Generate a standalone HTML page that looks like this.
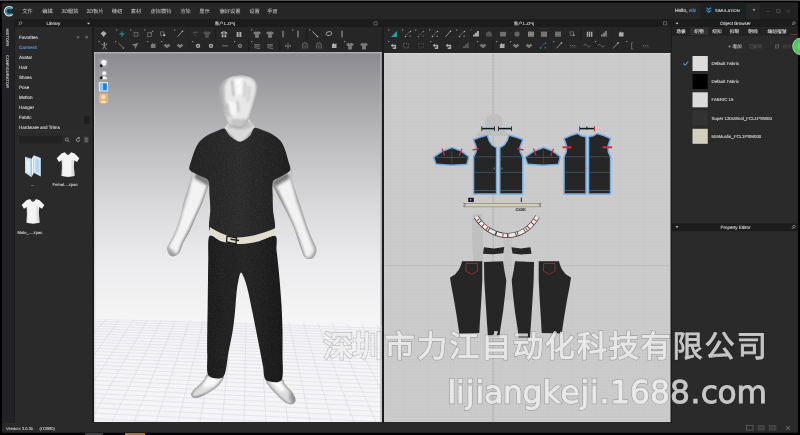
<!DOCTYPE html>
<html lang="zh"><head><meta charset="utf-8"><title>CLO</title>
<style>
html,body{margin:0;padding:0;background:#000;overflow:hidden;width:800px;height:435px}
svg{display:block}
text{font-family:"Liberation Sans","Noto Sans CJK SC",sans-serif;text-rendering:geometricPrecision}
.wml{font-family:"DejaVu Sans","Liberation Sans",sans-serif}
.wmc{font-family:"Noto Sans CJK SC","Liberation Sans",sans-serif}
</style></head><body>
<svg width="800" height="435" viewBox="0 0 800 435">
<defs>
<linearGradient id="g3d" gradientUnits="userSpaceOnUse" x1="0" y1="53" x2="0" y2="320">
<stop offset="0" stop-color="#8b8b8f"/>
<stop offset="0.18" stop-color="#a6a6a9"/>
<stop offset="0.37" stop-color="#c1c1c3"/>
<stop offset="0.55" stop-color="#d7d7d9"/>
<stop offset="0.78" stop-color="#ebebed"/>
<stop offset="1" stop-color="#f5f5f6"/>
</linearGradient>
<pattern id="grid2d" width="3" height="3" patternUnits="userSpaceOnUse" x="384" y="53">
<rect width="3" height="3" fill="#cccccc"/>
<path d="M0 0.5H3M0.5 0V3" stroke="#c6c6c6" stroke-width="0.5" fill="none"/>
</pattern>
<linearGradient id="skinH" x1="0" y1="0" x2="1" y2="0">
<stop offset="0" stop-color="#f4f4f4"/>
<stop offset="0.55" stop-color="#e2e2e2"/>
<stop offset="1" stop-color="#a9a9a9"/>
</linearGradient>
<linearGradient id="skinL" x1="0" y1="0" x2="1" y2="0">
<stop offset="0" stop-color="#b8b8b8"/>
<stop offset="0.4" stop-color="#f2f2f2"/>
<stop offset="1" stop-color="#c4c4c4"/>
</linearGradient>
<linearGradient id="skinR" x1="0" y1="0" x2="1" y2="0">
<stop offset="0" stop-color="#bdbdbd"/>
<stop offset="0.5" stop-color="#efefef"/>
<stop offset="1" stop-color="#b0b0b0"/>
</linearGradient>
<linearGradient id="shirtG" x1="0" y1="0" x2="1" y2="0">
<stop offset="0" stop-color="#222222"/>
<stop offset="0.5" stop-color="#2b2b2b"/>
<stop offset="1" stop-color="#1d1d1d"/>
</linearGradient>
<linearGradient id="pantG" x1="0" y1="0" x2="1" y2="0">
<stop offset="0" stop-color="#1c1c1c"/>
<stop offset="0.5" stop-color="#252525"/>
<stop offset="1" stop-color="#181818"/>
</linearGradient>
<filter id="soft" x="-5%" y="-5%" width="110%" height="110%"><feGaussianBlur stdDeviation="0.45"/></filter>
<filter id="soft2" x="-5%" y="-5%" width="110%" height="110%"><feGaussianBlur stdDeviation="0.3"/></filter>
<filter id="blur15" x="-30%" y="-30%" width="160%" height="160%"><feGaussianBlur stdDeviation="1.6"/></filter>
<filter id="blur08" x="-30%" y="-30%" width="160%" height="160%"><feGaussianBlur stdDeviation="0.9"/></filter>
<filter id="gsoft" filterUnits="userSpaceOnUse" x="0" y="0" width="800" height="435"><feGaussianBlur stdDeviation="0.32"/></filter>
<filter id="fab" x="0" y="0" width="100%" height="100%"><feTurbulence type="fractalNoise" baseFrequency="0.85" numOctaves="2" seed="4" result="n"/><feColorMatrix in="n" type="matrix" values="0 0 0 0 1  0 0 0 0 1  0 0 0 0 1  1.6 0 0 0 -0.62" result="m"/><feComposite in="m" in2="SourceGraphic" operator="in"/></filter>
<clipPath id="c3d"><rect x="94" y="52" width="287.7" height="370"/></clipPath>
<clipPath id="c2d"><rect x="384.3" y="53" width="286.2" height="369"/></clipPath>
<clipPath id="cfloor"><path d="M94 319L381.7 324.5V422H94Z"/></clipPath>
</defs>
<g filter="url(#gsoft)">
<rect x="0" y="0" width="800" height="435" fill="#000" />
<rect x="0" y="0" width="800" height="1" fill="#524e4e" />
<rect x="1.7" y="2.6" width="796.3" height="16.9" fill="#252526" />
<rect x="2" y="19.5" width="796" height="413" fill="#2c2c2c" />
<rect x="2" y="19.5" width="12.5" height="403.5" fill="#242425" />
<rect x="2" y="423" width="796" height="9.5" fill="#29292a" />
<rect x="85" y="433" width="18" height="2" fill="#3a3a3a" />
<rect x="125" y="433" width="20" height="2" fill="#b56a2c" />
<rect x="15" y="19.3" width="77" height="7.7" fill="#1b1b1c" />
<rect x="94" y="19.3" width="287.7" height="7.7" fill="#1b1b1c" />
<rect x="384.3" y="19.3" width="286.2" height="7.7" fill="#1b1b1c" />
<rect x="672" y="19.3" width="126" height="7.7" fill="#1b1b1c" />
<rect x="92" y="19.5" width="2" height="403.5" fill="#1c1c1d" />
<rect x="381.7" y="19.5" width="2.6" height="403.5" fill="#1a1a1b" />
<rect x="670.4" y="19.5" width="1.5" height="403.5" fill="#1a1a1b" />
<circle cx="9.1" cy="11.3" r="3.2" fill="#12343c"/>
<path d="M12.72 14.13A4.6 4.6 0 1 1 12.72 8.47" fill="none" stroke="#c9dfea" stroke-width="1.3"/>
<path d="M11.40 13.37A3.1 3.1 0 1 1 11.40 9.23" fill="none" stroke="#4f9fb6" stroke-width="1.2"/>
<path d="M5.12 13.60A4.6 4.6 0 1 1 8.30 15.83" fill="none" stroke="#7d9fd8" stroke-width="1.3" opacity="0.0"/>
<text x="27.5" y="12.5" font-size="5.25" fill="#bdbdbd" stroke="#bdbdbd"  text-anchor="middle" stroke-width="0.05">文件</text>
<text x="47.5" y="12.5" font-size="5.25" fill="#bdbdbd" stroke="#bdbdbd"  text-anchor="middle" stroke-width="0.05">编辑</text>
<text x="70" y="12.5" font-size="5.25" fill="#bdbdbd" stroke="#bdbdbd"  text-anchor="middle" stroke-width="0.05">3D服装</text>
<text x="95" y="12.5" font-size="5.25" fill="#bdbdbd" stroke="#bdbdbd"  text-anchor="middle" stroke-width="0.05">2D板片</text>
<text x="117" y="12.5" font-size="5.25" fill="#bdbdbd" stroke="#bdbdbd"  text-anchor="middle" stroke-width="0.05">缝纫</text>
<text x="136" y="12.5" font-size="5.25" fill="#bdbdbd" stroke="#bdbdbd"  text-anchor="middle" stroke-width="0.05">素材</text>
<text x="161" y="12.5" font-size="5.25" fill="#bdbdbd" stroke="#bdbdbd"  text-anchor="middle" stroke-width="0.05">虚拟模特</text>
<text x="185.5" y="12.5" font-size="5.25" fill="#bdbdbd" stroke="#bdbdbd"  text-anchor="middle" stroke-width="0.05">渲染</text>
<text x="204.5" y="12.5" font-size="5.25" fill="#bdbdbd" stroke="#bdbdbd"  text-anchor="middle" stroke-width="0.05">显示</text>
<text x="230" y="12.5" font-size="5.25" fill="#bdbdbd" stroke="#bdbdbd"  text-anchor="middle" stroke-width="0.05">偏好设置</text>
<text x="254.5" y="12.5" font-size="5.25" fill="#bdbdbd" stroke="#bdbdbd"  text-anchor="middle" stroke-width="0.05">设置</text>
<text x="272.5" y="12.5" font-size="5.25" fill="#bdbdbd" stroke="#bdbdbd"  text-anchor="middle" stroke-width="0.05">手册</text>
<text x="225" y="25.3" font-size="4.4" fill="#c8c8c8" stroke="#c8c8c8" stroke-width="0.12" text-anchor="middle" >客户1.ZPrj</text>
<text x="524" y="25.3" font-size="4.4" fill="#c8c8c8" stroke="#c8c8c8" stroke-width="0.12" text-anchor="middle" >客户1.ZPrj</text>
<path d="M374 21.8h3.2v3.2h-3.2z" fill="none" stroke="#8a8a8a" stroke-width="0.6"/>
<path d="M663.5 21.8h3.2v3.2h-3.2z" fill="none" stroke="#8a8a8a" stroke-width="0.6"/>
<text x="675" y="12.3" font-size="4.9" fill="#d8d8d8" stroke="#d8d8d8" stroke-width="0.15">Hello, <tspan fill="#4a9ee8" stroke="#4a9ee8">eilz</tspan></text>
<rect x="700.5" y="2.6" width="44.5" height="16.7" fill="#1f2023" />
<path d="M706.5 7.6l2.3 2 2.3-2M706.5 10.3l2.3 2 2.3-2" fill="none" stroke="#3d9be9" stroke-width="1.1"/>
<text x="715" y="12.1" font-size="4.1" fill="#d0d0d0" stroke="#d0d0d0" stroke-width="0.12" text-anchor="start" >SIMULATION</text>
<path d="M752.5 9.3h3l-1.5 1.8z" fill="#c0c0c0"/>
<rect x="745" y="2" width="0.6" height="17.5" fill="#141414" />
<rect x="760" y="2.6" width="38" height="16.7" fill="#202021" />
<line x1="766.5" y1="11.5" x2="769.5" y2="11.5" stroke="#4a4a4a" stroke-width="0.7" />
<rect x="776.8" y="9.5" width="3.2" height="3.2" fill="none" stroke="#555" stroke-width="0.7"/>
<path d="M786.8 9.6l3 3.2M789.8 9.6l-3 3.200" stroke="#4a4a4a" stroke-width="0.7"/>
<text x="6" y="429.6" font-size="4.1" fill="#c4c4c4" stroke="#c4c4c4" stroke-width="0.12" text-anchor="start" >Version: 3.0.35</text>
<text x="39.5" y="429.6" font-size="4.1" fill="#c4c4c4" stroke="#c4c4c4" stroke-width="0.12" text-anchor="start" >(r13980)</text>
<rect x="746.5" y="425.3" width="6.5" height="4.8" fill="none" stroke="#6a6a6a" stroke-width="0.7"/>
<rect x="758" y="425.3" width="6.5" height="4.8" fill="#3c3c3c" stroke="#555" stroke-width="0.5"/>
<rect x="769.5" y="425.3" width="6.5" height="4.8" fill="#3c3c3c" stroke="#555" stroke-width="0.5"/>
<path d="M786 426l4 4M790 426l-4 4" stroke="#777" stroke-width="0.8"/>
<rect x="94" y="52" width="287.7" height="370" fill="url(#g3d)" />
<g clip-path="url(#cfloor)">
<rect x="94" y="315" width="288" height="110" fill="#f5f5f7" />
<line x1="250" y1="137" x2="-971.6" y2="479.0" stroke="#d6d6de" stroke-width="0.6"/>
<line x1="250" y1="137" x2="-945.2" y2="479.0" stroke="#d6d6de" stroke-width="0.6"/>
<line x1="250" y1="137" x2="-918.8" y2="479.0" stroke="#d6d6de" stroke-width="0.6"/>
<line x1="250" y1="137" x2="-892.4" y2="479.0" stroke="#d6d6de" stroke-width="0.6"/>
<line x1="250" y1="137" x2="-866.0" y2="479.0" stroke="#d6d6de" stroke-width="0.6"/>
<line x1="250" y1="137" x2="-839.6" y2="479.0" stroke="#d6d6de" stroke-width="0.6"/>
<line x1="250" y1="137" x2="-813.2" y2="479.0" stroke="#d6d6de" stroke-width="0.6"/>
<line x1="250" y1="137" x2="-786.8" y2="479.0" stroke="#d6d6de" stroke-width="0.6"/>
<line x1="250" y1="137" x2="-760.4" y2="479.0" stroke="#d6d6de" stroke-width="0.6"/>
<line x1="250" y1="137" x2="-734.0" y2="479.0" stroke="#d6d6de" stroke-width="0.6"/>
<line x1="250" y1="137" x2="-707.6" y2="479.0" stroke="#d6d6de" stroke-width="0.6"/>
<line x1="250" y1="137" x2="-681.2" y2="479.0" stroke="#d6d6de" stroke-width="0.6"/>
<line x1="250" y1="137" x2="-654.8" y2="479.0" stroke="#d6d6de" stroke-width="0.6"/>
<line x1="250" y1="137" x2="-628.4" y2="479.0" stroke="#d6d6de" stroke-width="0.6"/>
<line x1="250" y1="137" x2="-602.0" y2="479.0" stroke="#d6d6de" stroke-width="0.6"/>
<line x1="250" y1="137" x2="-575.6" y2="479.0" stroke="#d6d6de" stroke-width="0.6"/>
<line x1="250" y1="137" x2="-549.2" y2="479.0" stroke="#d6d6de" stroke-width="0.6"/>
<line x1="250" y1="137" x2="-522.8" y2="479.0" stroke="#d6d6de" stroke-width="0.6"/>
<line x1="250" y1="137" x2="-496.4" y2="479.0" stroke="#d6d6de" stroke-width="0.6"/>
<line x1="250" y1="137" x2="-470.0" y2="479.0" stroke="#d6d6de" stroke-width="0.6"/>
<line x1="250" y1="137" x2="-443.6" y2="479.0" stroke="#d6d6de" stroke-width="0.6"/>
<line x1="250" y1="137" x2="-417.2" y2="479.0" stroke="#d6d6de" stroke-width="0.6"/>
<line x1="250" y1="137" x2="-390.8" y2="479.0" stroke="#d6d6de" stroke-width="0.6"/>
<line x1="250" y1="137" x2="-364.4" y2="479.0" stroke="#d6d6de" stroke-width="0.6"/>
<line x1="250" y1="137" x2="-338.0" y2="479.0" stroke="#d6d6de" stroke-width="0.6"/>
<line x1="250" y1="137" x2="-311.6" y2="479.0" stroke="#d6d6de" stroke-width="0.6"/>
<line x1="250" y1="137" x2="-285.2" y2="479.0" stroke="#d6d6de" stroke-width="0.6"/>
<line x1="250" y1="137" x2="-258.8" y2="479.0" stroke="#d6d6de" stroke-width="0.6"/>
<line x1="250" y1="137" x2="-232.4" y2="479.0" stroke="#d6d6de" stroke-width="0.6"/>
<line x1="250" y1="137" x2="-206.0" y2="479.0" stroke="#d6d6de" stroke-width="0.6"/>
<line x1="250" y1="137" x2="-179.6" y2="479.0" stroke="#d6d6de" stroke-width="0.6"/>
<line x1="250" y1="137" x2="-153.2" y2="479.0" stroke="#d6d6de" stroke-width="0.6"/>
<line x1="250" y1="137" x2="-126.8" y2="479.0" stroke="#d6d6de" stroke-width="0.6"/>
<line x1="250" y1="137" x2="-100.4" y2="479.0" stroke="#d6d6de" stroke-width="0.6"/>
<line x1="250" y1="137" x2="-74.0" y2="479.0" stroke="#d6d6de" stroke-width="0.6"/>
<line x1="250" y1="137" x2="-47.6" y2="479.0" stroke="#d6d6de" stroke-width="0.6"/>
<line x1="250" y1="137" x2="-21.2" y2="479.0" stroke="#d6d6de" stroke-width="0.6"/>
<line x1="250" y1="137" x2="5.2" y2="479.0" stroke="#d6d6de" stroke-width="0.6"/>
<line x1="250" y1="137" x2="31.6" y2="479.0" stroke="#d6d6de" stroke-width="0.6"/>
<line x1="250" y1="137" x2="58.0" y2="479.0" stroke="#d6d6de" stroke-width="0.6"/>
<line x1="250" y1="137" x2="84.4" y2="479.0" stroke="#d6d6de" stroke-width="0.6"/>
<line x1="250" y1="137" x2="110.8" y2="479.0" stroke="#d6d6de" stroke-width="0.6"/>
<line x1="250" y1="137" x2="137.2" y2="479.0" stroke="#d6d6de" stroke-width="0.6"/>
<line x1="250" y1="137" x2="163.6" y2="479.0" stroke="#d6d6de" stroke-width="0.6"/>
<line x1="250" y1="137" x2="190.0" y2="479.0" stroke="#d6d6de" stroke-width="0.6"/>
<line x1="250" y1="137" x2="216.4" y2="479.0" stroke="#d6d6de" stroke-width="0.6"/>
<line x1="250" y1="137" x2="242.8" y2="479.0" stroke="#d6d6de" stroke-width="0.6"/>
<line x1="250" y1="137" x2="269.2" y2="479.0" stroke="#d6d6de" stroke-width="0.6"/>
<line x1="250" y1="137" x2="295.6" y2="479.0" stroke="#d6d6de" stroke-width="0.6"/>
<line x1="250" y1="137" x2="322.0" y2="479.0" stroke="#d6d6de" stroke-width="0.6"/>
<line x1="250" y1="137" x2="348.4" y2="479.0" stroke="#d6d6de" stroke-width="0.6"/>
<line x1="250" y1="137" x2="374.8" y2="479.0" stroke="#d6d6de" stroke-width="0.6"/>
<line x1="250" y1="137" x2="401.2" y2="479.0" stroke="#d6d6de" stroke-width="0.6"/>
<line x1="250" y1="137" x2="427.6" y2="479.0" stroke="#d6d6de" stroke-width="0.6"/>
<line x1="250" y1="137" x2="454.0" y2="479.0" stroke="#d6d6de" stroke-width="0.6"/>
<line x1="250" y1="137" x2="480.4" y2="479.0" stroke="#d6d6de" stroke-width="0.6"/>
<line x1="250" y1="137" x2="506.8" y2="479.0" stroke="#d6d6de" stroke-width="0.6"/>
<line x1="250" y1="137" x2="533.2" y2="479.0" stroke="#d6d6de" stroke-width="0.6"/>
<line x1="250" y1="137" x2="559.6" y2="479.0" stroke="#d6d6de" stroke-width="0.6"/>
<line x1="250" y1="137" x2="586.0" y2="479.0" stroke="#d6d6de" stroke-width="0.6"/>
<line x1="250" y1="137" x2="612.4" y2="479.0" stroke="#d6d6de" stroke-width="0.6"/>
<line x1="250" y1="137" x2="638.8" y2="479.0" stroke="#d6d6de" stroke-width="0.6"/>
<line x1="250" y1="137" x2="665.2" y2="479.0" stroke="#d6d6de" stroke-width="0.6"/>
<line x1="250" y1="137" x2="691.6" y2="479.0" stroke="#d6d6de" stroke-width="0.6"/>
<line x1="250" y1="137" x2="718.0" y2="479.0" stroke="#d6d6de" stroke-width="0.6"/>
<line x1="250" y1="137" x2="744.4" y2="479.0" stroke="#d6d6de" stroke-width="0.6"/>
<line x1="250" y1="137" x2="770.8" y2="479.0" stroke="#d6d6de" stroke-width="0.6"/>
<line x1="250" y1="137" x2="797.2" y2="479.0" stroke="#d6d6de" stroke-width="0.6"/>
<line x1="250" y1="137" x2="823.6" y2="479.0" stroke="#d6d6de" stroke-width="0.6"/>
<line x1="250" y1="137" x2="850.0" y2="479.0" stroke="#d6d6de" stroke-width="0.6"/>
<line x1="250" y1="137" x2="876.4" y2="479.0" stroke="#d6d6de" stroke-width="0.6"/>
<line x1="250" y1="137" x2="902.8" y2="479.0" stroke="#d6d6de" stroke-width="0.6"/>
<line x1="250" y1="137" x2="929.2" y2="479.0" stroke="#d6d6de" stroke-width="0.6"/>
<line x1="250" y1="137" x2="955.6" y2="479.0" stroke="#d6d6de" stroke-width="0.6"/>
<line x1="250" y1="137" x2="982.0" y2="479.0" stroke="#d6d6de" stroke-width="0.6"/>
<line x1="250" y1="137" x2="1008.4" y2="479.0" stroke="#d6d6de" stroke-width="0.6"/>
<line x1="250" y1="137" x2="1034.8" y2="479.0" stroke="#d6d6de" stroke-width="0.6"/>
<line x1="250" y1="137" x2="1061.2" y2="479.0" stroke="#d6d6de" stroke-width="0.6"/>
<line x1="250" y1="137" x2="1087.6" y2="479.0" stroke="#d6d6de" stroke-width="0.6"/>
<line x1="250" y1="137" x2="1114.0" y2="479.0" stroke="#d6d6de" stroke-width="0.6"/>
<line x1="250" y1="137" x2="1140.4" y2="479.0" stroke="#d6d6de" stroke-width="0.6"/>
<line x1="94" y1="318.97" x2="400" y2="328.92" stroke="#d9d9e0" stroke-width="0.55"/>
<line x1="94" y1="321.30" x2="400" y2="331.38" stroke="#d9d9e0" stroke-width="0.55"/>
<line x1="94" y1="323.68" x2="400" y2="333.90" stroke="#d9d9e0" stroke-width="0.55"/>
<line x1="94" y1="326.13" x2="400" y2="336.48" stroke="#d9d9e0" stroke-width="0.55"/>
<line x1="94" y1="328.65" x2="400" y2="339.13" stroke="#d9d9e0" stroke-width="0.55"/>
<line x1="94" y1="331.23" x2="400" y2="341.86" stroke="#d9d9e0" stroke-width="0.55"/>
<line x1="94" y1="333.89" x2="400" y2="344.66" stroke="#d9d9e0" stroke-width="0.55"/>
<line x1="94" y1="336.62" x2="400" y2="347.54" stroke="#d9d9e0" stroke-width="0.55"/>
<line x1="94" y1="339.42" x2="400" y2="350.49" stroke="#d9d9e0" stroke-width="0.55"/>
<line x1="94" y1="342.31" x2="400" y2="353.54" stroke="#d9d9e0" stroke-width="0.55"/>
<line x1="94" y1="345.27" x2="400" y2="356.67" stroke="#d9d9e0" stroke-width="0.55"/>
<line x1="94" y1="348.33" x2="400" y2="359.89" stroke="#d9d9e0" stroke-width="0.55"/>
<line x1="94" y1="351.48" x2="400" y2="363.21" stroke="#d9d9e0" stroke-width="0.55"/>
<line x1="94" y1="354.72" x2="400" y2="366.63" stroke="#d9d9e0" stroke-width="0.55"/>
<line x1="94" y1="358.06" x2="400" y2="370.15" stroke="#d9d9e0" stroke-width="0.55"/>
<line x1="94" y1="361.50" x2="400" y2="373.78" stroke="#d9d9e0" stroke-width="0.55"/>
<line x1="94" y1="365.06" x2="400" y2="377.53" stroke="#d9d9e0" stroke-width="0.55"/>
<line x1="94" y1="368.72" x2="400" y2="381.40" stroke="#d9d9e0" stroke-width="0.55"/>
<line x1="94" y1="372.51" x2="400" y2="385.40" stroke="#d9d9e0" stroke-width="0.55"/>
<line x1="94" y1="376.43" x2="400" y2="389.52" stroke="#d9d9e0" stroke-width="0.55"/>
<line x1="94" y1="380.47" x2="400" y2="393.79" stroke="#d9d9e0" stroke-width="0.55"/>
<line x1="94" y1="384.66" x2="400" y2="398.21" stroke="#d9d9e0" stroke-width="0.55"/>
<line x1="94" y1="388.99" x2="400" y2="402.77" stroke="#d9d9e0" stroke-width="0.55"/>
<line x1="94" y1="393.48" x2="400" y2="407.51" stroke="#d9d9e0" stroke-width="0.55"/>
<line x1="94" y1="398.12" x2="400" y2="412.41" stroke="#d9d9e0" stroke-width="0.55"/>
<line x1="94" y1="402.94" x2="400" y2="417.49" stroke="#d9d9e0" stroke-width="0.55"/>
<line x1="94" y1="407.95" x2="400" y2="422.77" stroke="#d9d9e0" stroke-width="0.55"/>
<line x1="94" y1="413.14" x2="400" y2="428.25" stroke="#d9d9e0" stroke-width="0.55"/>
<line x1="94" y1="418.54" x2="400" y2="433.94" stroke="#d9d9e0" stroke-width="0.55"/>
<line x1="94" y1="424.15" x2="400" y2="439.86" stroke="#d9d9e0" stroke-width="0.55"/>
</g>
<rect x="94" y="52" width="287.7" height="1.5" fill="#b0b0b3" />
<rect x="94" y="52" width="1.2" height="370" fill="#c8c8cc" opacity="0.6"/>
<rect x="380.2" y="52" width="1.500" height="370" fill="#b4b4ba" opacity="0.75"/>
<g clip-path="url(#c3d)" filter="url(#soft)">
<clipPath id="pLF"><path d="M208.0 374.0C211.2 373.4 220.7 374.8 223.0 376.0C225.3 377.2 223.0 379.2 222.0 381.0C221.0 382.8 219.2 385.1 217.0 387.0C214.8 388.9 211.8 390.8 209.0 392.5C206.2 394.2 202.5 396.1 200.0 397.0C197.5 397.9 195.5 398.3 194.0 398.0C192.5 397.7 191.2 396.2 191.0 395.0C190.8 393.8 191.7 392.2 193.0 390.5C194.3 388.8 197.2 386.8 199.0 385.0C200.8 383.2 202.5 381.3 204.0 379.5C205.5 377.7 204.8 374.6 208.0 374.0Z"/></clipPath>
<g clip-path="url(#pLF)"><path d="M208.0 374.0C211.2 373.4 220.7 374.8 223.0 376.0C225.3 377.2 223.0 379.2 222.0 381.0C221.0 382.8 219.2 385.1 217.0 387.0C214.8 388.9 211.8 390.8 209.0 392.5C206.2 394.2 202.5 396.1 200.0 397.0C197.5 397.9 195.5 398.3 194.0 398.0C192.5 397.7 191.2 396.2 191.0 395.0C190.8 393.8 191.7 392.2 193.0 390.5C194.3 388.8 197.2 386.8 199.0 385.0C200.8 383.2 202.5 381.3 204.0 379.5C205.5 377.7 204.8 374.6 208.0 374.0Z" fill="#dedede"/><g filter="url(#blur15)">
<path d="M190 399 L212 393 L224 382 L226 392 L200 402Z" fill="#8e8e8e"/>
<path d="M205 377 L222 378 L214 386 L203 388Z" fill="#fafafa"/>
</g>
<path d="M208.0 374.0C211.2 373.4 220.7 374.8 223.0 376.0C225.3 377.2 223.0 379.2 222.0 381.0C221.0 382.8 219.2 385.1 217.0 387.0C214.8 388.9 211.8 390.8 209.0 392.5C206.2 394.2 202.5 396.1 200.0 397.0C197.5 397.9 195.5 398.3 194.0 398.0C192.5 397.7 191.2 396.2 191.0 395.0C190.8 393.8 191.7 392.2 193.0 390.5C194.3 388.8 197.2 386.8 199.0 385.0C200.8 383.2 202.5 381.3 204.0 379.5C205.5 377.7 204.8 374.6 208.0 374.0Z" fill="none" stroke="#808080" stroke-width="2.4" opacity="0.8" filter="url(#blur08)"/>
</g>
<clipPath id="pRF"><path d="M266.0 379.0C267.9 377.6 278.3 378.2 281.5 379.0C284.7 379.8 283.6 382.2 285.0 384.0C286.4 385.8 288.5 387.7 290.0 389.5C291.5 391.3 293.1 393.2 294.0 395.0C294.9 396.8 295.7 399.0 295.5 400.5C295.3 402.0 294.2 403.4 293.0 404.0C291.8 404.6 289.8 404.7 288.0 404.0C286.2 403.3 284.0 401.7 282.0 400.0C280.0 398.3 278.0 396.1 276.0 394.0C274.0 391.9 271.7 390.0 270.0 387.5C268.3 385.0 264.1 380.4 266.0 379.0Z"/></clipPath>
<g clip-path="url(#pRF)"><path d="M266.0 379.0C267.9 377.6 278.3 378.2 281.5 379.0C284.7 379.8 283.6 382.2 285.0 384.0C286.4 385.8 288.5 387.7 290.0 389.5C291.5 391.3 293.1 393.2 294.0 395.0C294.9 396.8 295.7 399.0 295.5 400.5C295.3 402.0 294.2 403.4 293.0 404.0C291.8 404.6 289.8 404.7 288.0 404.0C286.2 403.3 284.0 401.7 282.0 400.0C280.0 398.3 278.0 396.1 276.0 394.0C274.0 391.9 271.7 390.0 270.0 387.5C268.3 385.0 264.1 380.4 266.0 379.0Z" fill="#dcdcdc"/><g filter="url(#blur15)">
<path d="M264 384 L274 396 L286 406 L280 408 L262 392Z" fill="#909090"/>
<path d="M291 390 L297 399 L294 406 L289 398Z" fill="#9a9a9a"/>
<path d="M270 380 L280 380 L286 390 L280 392Z" fill="#fbfbfb"/>
</g>
<path d="M266.0 379.0C267.9 377.6 278.3 378.2 281.5 379.0C284.7 379.8 283.6 382.2 285.0 384.0C286.4 385.8 288.5 387.7 290.0 389.5C291.5 391.3 293.1 393.2 294.0 395.0C294.9 396.8 295.7 399.0 295.5 400.5C295.3 402.0 294.2 403.4 293.0 404.0C291.8 404.6 289.8 404.7 288.0 404.0C286.2 403.3 284.0 401.7 282.0 400.0C280.0 398.3 278.0 396.1 276.0 394.0C274.0 391.9 271.7 390.0 270.0 387.5C268.3 385.0 264.1 380.4 266.0 379.0Z" fill="none" stroke="#808080" stroke-width="2.4" opacity="0.8" filter="url(#blur08)"/>
</g>
<clipPath id="pLA"><path d="M190.0 169.0C187.0 168.0 191.8 171.8 191.5 175.0C191.2 178.2 189.2 183.8 188.0 188.0C186.8 192.2 185.3 195.9 184.0 200.5C182.7 205.1 181.8 210.6 180.4 215.7C179.0 220.8 177.0 226.8 175.3 231.0C173.6 235.2 171.7 238.3 170.3 241.0C169.0 243.7 167.6 245.4 167.2 247.3C166.8 249.2 167.4 251.1 168.0 252.5C168.6 253.9 169.8 255.4 171.0 256.0C172.2 256.6 173.6 256.6 175.0 256.0C176.4 255.4 178.2 254.5 179.5 252.4C180.8 250.3 181.3 247.1 183.0 243.5C184.7 239.9 187.7 235.2 189.8 231.0C191.9 226.8 193.4 222.7 195.5 218.0C197.6 213.3 200.3 208.0 202.3 203.0C204.3 198.0 206.5 191.5 207.7 187.8C208.9 184.1 212.4 184.1 209.5 181.0C206.6 177.9 193.0 170.0 190.0 169.0Z"/></clipPath>
<g clip-path="url(#pLA)"><path d="M190.0 169.0C187.0 168.0 191.8 171.8 191.5 175.0C191.2 178.2 189.2 183.8 188.0 188.0C186.8 192.2 185.3 195.9 184.0 200.5C182.7 205.1 181.8 210.6 180.4 215.7C179.0 220.8 177.0 226.8 175.3 231.0C173.6 235.2 171.7 238.3 170.3 241.0C169.0 243.7 167.6 245.4 167.2 247.3C166.8 249.2 167.4 251.1 168.0 252.5C168.6 253.9 169.8 255.4 171.0 256.0C172.2 256.6 173.6 256.6 175.0 256.0C176.4 255.4 178.2 254.5 179.5 252.4C180.8 250.3 181.3 247.1 183.0 243.5C184.7 239.9 187.7 235.2 189.8 231.0C191.9 226.8 193.4 222.7 195.5 218.0C197.6 213.3 200.3 208.0 202.3 203.0C204.3 198.0 206.5 191.5 207.7 187.8C208.9 184.1 212.4 184.1 209.5 181.0C206.6 177.9 193.0 170.0 190.0 169.0Z" fill="#f3f3f3"/><g filter="url(#blur15)">
<path d="M210 180 L203 200 L191 226 L181 246 L178 258 L187 250 L201 220 L213 190Z" fill="#8c8c8c"/>
<path d="M196 172 L210 180 L208 186 L194 178Z" fill="#777"/>
<path d="M166 246 L170 258 L178 256 L172 250Z" fill="#a5a5a5"/>
<path d="M190 170 L186 190 L181 208 L184 209 L190 192Z" fill="#c9c9c9" opacity="0.6"/>
</g>
<path d="M190.0 169.0C187.0 168.0 191.8 171.8 191.5 175.0C191.2 178.2 189.2 183.8 188.0 188.0C186.8 192.2 185.3 195.9 184.0 200.5C182.7 205.1 181.8 210.6 180.4 215.7C179.0 220.8 177.0 226.8 175.3 231.0C173.6 235.2 171.7 238.3 170.3 241.0C169.0 243.7 167.6 245.4 167.2 247.3C166.8 249.2 167.4 251.1 168.0 252.5C168.6 253.9 169.8 255.4 171.0 256.0C172.2 256.6 173.6 256.6 175.0 256.0C176.4 255.4 178.2 254.5 179.5 252.4C180.8 250.3 181.3 247.1 183.0 243.5C184.7 239.9 187.7 235.2 189.8 231.0C191.9 226.8 193.4 222.7 195.5 218.0C197.6 213.3 200.3 208.0 202.3 203.0C204.3 198.0 206.5 191.5 207.7 187.8C208.9 184.1 212.4 184.1 209.5 181.0C206.6 177.9 193.0 170.0 190.0 169.0Z" fill="none" stroke="#8c8c8c" stroke-width="2.6" opacity="0.75" filter="url(#blur08)"/>
</g>
<clipPath id="pRA"><path d="M290.5 169.5C293.8 169.2 290.9 175.7 292.0 180.0C293.1 184.3 295.3 190.3 297.0 195.4C298.7 200.5 300.3 205.5 302.0 210.6C303.7 215.7 305.3 221.2 307.0 225.8C308.7 230.5 310.5 234.9 312.0 238.5C313.5 242.1 315.3 244.9 316.0 247.3C316.7 249.7 316.5 251.2 316.0 253.0C315.5 254.8 314.3 257.0 313.0 258.0C311.7 259.0 309.5 259.2 308.0 259.0C306.5 258.8 305.1 258.0 304.0 256.5C302.9 255.0 302.6 253.0 301.5 250.0C300.4 247.0 298.9 242.5 297.5 238.5C296.1 234.5 294.8 230.1 293.0 225.8C291.2 221.6 289.1 217.2 287.0 213.0C284.9 208.8 282.4 204.3 280.5 200.5C278.6 196.7 276.7 193.5 275.4 190.4C274.1 187.3 270.0 185.5 272.5 182.0C275.0 178.5 287.2 169.8 290.5 169.5Z"/></clipPath>
<g clip-path="url(#pRA)"><path d="M290.5 169.5C293.8 169.2 290.9 175.7 292.0 180.0C293.1 184.3 295.3 190.3 297.0 195.4C298.7 200.5 300.3 205.5 302.0 210.6C303.7 215.7 305.3 221.2 307.0 225.8C308.7 230.5 310.5 234.9 312.0 238.5C313.5 242.1 315.3 244.9 316.0 247.3C316.7 249.7 316.5 251.2 316.0 253.0C315.5 254.8 314.3 257.0 313.0 258.0C311.7 259.0 309.5 259.2 308.0 259.0C306.5 258.8 305.1 258.0 304.0 256.5C302.9 255.0 302.6 253.0 301.5 250.0C300.4 247.0 298.9 242.5 297.5 238.5C296.1 234.5 294.8 230.1 293.0 225.8C291.2 221.6 289.1 217.2 287.0 213.0C284.9 208.8 282.4 204.3 280.5 200.5C278.6 196.7 276.7 193.5 275.4 190.4C274.1 187.3 270.0 185.5 272.5 182.0C275.0 178.5 287.2 169.8 290.5 169.5Z" fill="#f2f2f2"/><g filter="url(#blur15)">
<path d="M271 182 L276 196 L287 216 L295 234 L300 252 L305 260 L299 240 L288.5 214 L278 190Z" fill="#8c8c8c"/>
<path d="M272 181 L288 172 L290 178 L275 187Z" fill="#777"/>
<path d="M293 180 L299 198 L306 218 L312 236 L318 248 L318 260 L306 262 L314 250 L304 222 L296 200Z" fill="#b4b4b4" opacity="0.8"/>
</g>
<path d="M290.5 169.5C293.8 169.2 290.9 175.7 292.0 180.0C293.1 184.3 295.3 190.3 297.0 195.4C298.7 200.5 300.3 205.5 302.0 210.6C303.7 215.7 305.3 221.2 307.0 225.8C308.7 230.5 310.5 234.9 312.0 238.5C313.5 242.1 315.3 244.9 316.0 247.3C316.7 249.7 316.5 251.2 316.0 253.0C315.5 254.8 314.3 257.0 313.0 258.0C311.7 259.0 309.5 259.2 308.0 259.0C306.5 258.8 305.1 258.0 304.0 256.5C302.9 255.0 302.6 253.0 301.5 250.0C300.4 247.0 298.9 242.5 297.5 238.5C296.1 234.5 294.8 230.1 293.0 225.8C291.2 221.6 289.1 217.2 287.0 213.0C284.9 208.8 282.4 204.3 280.5 200.5C278.6 196.7 276.7 193.5 275.4 190.4C274.1 187.3 270.0 185.5 272.5 182.0C275.0 178.5 287.2 169.8 290.5 169.5Z" fill="none" stroke="#8c8c8c" stroke-width="2.6" opacity="0.75" filter="url(#blur08)"/>
</g>
<path d="M231 119 L249 119 L255 127.3 L240 143 L224.5 127.8Z" fill="#dadada"/>
<path d="M227 127 L236 129.5 L244 129.5 L253 126.5 L250 122 L230 122Z" fill="#a8a8a8" opacity="0.55" filter="url(#blur08)"/>
<clipPath id="pHD"><path d="M240.0 75.3C238.3 75.3 236.2 75.5 234.5 75.8C232.8 76.1 231.0 76.6 229.5 77.2C228.0 77.8 226.7 78.4 225.5 79.2C224.3 80.0 223.4 81.0 222.5 82.0C221.6 83.0 220.8 84.3 220.3 85.5C219.8 86.7 219.6 87.7 219.5 89.0C219.4 90.3 219.5 92.0 219.6 93.5C219.7 95.0 220.0 96.5 220.3 98.0C220.6 99.5 220.9 101.0 221.3 102.5C221.7 104.0 222.0 105.1 222.5 107.0C223.0 108.9 223.6 111.8 224.3 114.0C225.0 116.2 225.6 118.1 226.5 120.0C227.4 121.9 228.4 124.1 230.0 125.5C231.6 126.9 234.0 127.9 236.0 128.3C238.0 128.7 240.2 128.6 242.0 128.0C243.8 127.4 245.2 126.3 246.5 124.5C247.8 122.7 248.5 119.9 249.5 117.0C250.5 114.1 251.5 110.3 252.5 107.0C253.5 103.7 254.7 100.1 255.5 97.0C256.3 93.9 257.1 90.7 257.3 88.5C257.5 86.3 257.2 85.3 256.8 84.0C256.4 82.7 255.7 81.5 255.0 80.5C254.3 79.5 253.5 79.0 252.5 78.3C251.5 77.6 250.3 77.0 249.0 76.5C247.7 76.0 246.0 75.7 244.5 75.5C243.0 75.3 241.7 75.2 240.0 75.3Z"/></clipPath>
<g clip-path="url(#pHD)"><path d="M240.0 75.3C238.3 75.3 236.2 75.5 234.5 75.8C232.8 76.1 231.0 76.6 229.5 77.2C228.0 77.8 226.7 78.4 225.5 79.2C224.3 80.0 223.4 81.0 222.5 82.0C221.6 83.0 220.8 84.3 220.3 85.5C219.8 86.7 219.6 87.7 219.5 89.0C219.4 90.3 219.5 92.0 219.6 93.5C219.7 95.0 220.0 96.5 220.3 98.0C220.6 99.5 220.9 101.0 221.3 102.5C221.7 104.0 222.0 105.1 222.5 107.0C223.0 108.9 223.6 111.8 224.3 114.0C225.0 116.2 225.6 118.1 226.5 120.0C227.4 121.9 228.4 124.1 230.0 125.5C231.6 126.9 234.0 127.9 236.0 128.3C238.0 128.7 240.2 128.6 242.0 128.0C243.8 127.4 245.2 126.3 246.5 124.5C247.8 122.7 248.5 119.9 249.5 117.0C250.5 114.1 251.5 110.3 252.5 107.0C253.5 103.7 254.7 100.1 255.5 97.0C256.3 93.9 257.1 90.7 257.3 88.5C257.5 86.3 257.2 85.3 256.8 84.0C256.4 82.7 255.7 81.5 255.0 80.5C254.3 79.5 253.5 79.0 252.5 78.3C251.5 77.6 250.3 77.0 249.0 76.5C247.7 76.0 246.0 75.7 244.5 75.5C243.0 75.3 241.7 75.2 240.0 75.3Z" fill="#e8e8e8"/><g filter="url(#blur08)">
<path d="M217 76 L229 75 L224.500 86 L225 100 L229 116 L221 108 L217 94Z" fill="#b9b9b9"/>
<path d="M256 79 L260 84 L259 100 L253 116 L247 126 L252.500 110 L256 94Z" fill="#bdbdbd"/>
<path d="M231.300 80 L232.500 80 L234 96 L232.800 96Z" fill="#9a9a9a"/>
<path d="M244.500 82 L245.500 82 L244.500 98 L243.500 98Z" fill="#b0b0b0"/>
<path d="M236.800 101 L238.300 101 L239.500 112 L237.800 112Z" fill="#b4b4b4"/>
<path d="M230 119 L249 119 L246 129 L233 129Z" fill="#c4c4c4"/>
<path d="M222 102 L229 104 L232 118 L226 116Z" fill="#c2c2c2"/>
<path d="M235 79 L242 78 L241.500 95 L236.500 95Z" fill="#fbfbfb"/>
<path d="M246.500 86 L252 86 L250 100 L246.500 104Z" fill="#d6d6d6"/>
<path d="M228 100 L236 104 L236 116 L230 114Z" fill="#f6f6f6"/>
</g>
<path d="M240.0 75.3C238.3 75.3 236.2 75.5 234.5 75.8C232.8 76.1 231.0 76.6 229.5 77.2C228.0 77.8 226.7 78.4 225.5 79.2C224.3 80.0 223.4 81.0 222.5 82.0C221.6 83.0 220.8 84.3 220.3 85.5C219.8 86.7 219.6 87.7 219.5 89.0C219.4 90.3 219.5 92.0 219.6 93.5C219.7 95.0 220.0 96.5 220.3 98.0C220.6 99.5 220.9 101.0 221.3 102.5C221.7 104.0 222.0 105.1 222.5 107.0C223.0 108.9 223.6 111.8 224.3 114.0C225.0 116.2 225.6 118.1 226.5 120.0C227.4 121.9 228.4 124.1 230.0 125.5C231.6 126.9 234.0 127.9 236.0 128.3C238.0 128.7 240.2 128.6 242.0 128.0C243.8 127.4 245.2 126.3 246.5 124.5C247.8 122.7 248.5 119.9 249.5 117.0C250.5 114.1 251.5 110.3 252.5 107.0C253.5 103.7 254.7 100.1 255.5 97.0C256.3 93.9 257.1 90.7 257.3 88.5C257.5 86.3 257.2 85.3 256.8 84.0C256.4 82.7 255.7 81.5 255.0 80.5C254.3 79.5 253.5 79.0 252.5 78.3C251.5 77.6 250.3 77.0 249.0 76.5C247.7 76.0 246.0 75.7 244.5 75.5C243.0 75.3 241.7 75.2 240.0 75.3Z" fill="none" stroke="#989898" stroke-width="2.4" opacity="0.65" filter="url(#blur08)"/>
</g>
<path d="M209.5 236.0C211.6 233.5 217.4 240.3 222.0 241.5C226.6 242.7 234.6 244.0 240.0 244.0C245.4 244.0 252.7 242.7 258.0 241.5C263.3 240.3 272.5 234.7 275.3 236.0C278.1 237.3 276.0 245.2 276.5 250.0C277.0 254.8 278.0 262.8 278.5 268.0C279.0 273.2 279.6 279.4 280.0 285.0C280.4 290.6 281.1 298.2 281.5 305.0C281.9 311.8 282.4 322.5 282.5 330.0C282.6 337.5 282.6 347.5 282.5 355.0C282.4 362.5 284.0 376.2 281.5 380.0C279.0 383.8 268.8 382.1 266.0 380.0C263.2 377.9 264.0 370.8 263.0 366.0C262.0 361.2 260.6 353.4 259.5 348.0C258.4 342.6 257.1 335.7 256.0 330.0C254.9 324.3 253.2 315.9 252.0 310.0C250.8 304.1 249.1 295.6 248.0 291.0C246.9 286.4 245.6 281.8 244.5 279.0C243.4 276.2 241.9 272.4 241.0 272.5C240.1 272.6 239.2 276.9 238.5 280.0C237.8 283.1 237.0 288.2 236.5 293.0C236.0 297.8 235.6 306.1 235.0 312.0C234.4 317.9 233.5 326.0 232.5 332.0C231.5 338.0 229.8 345.3 228.5 352.0C227.2 358.7 226.5 373.0 223.5 376.5C220.5 380.0 210.9 378.7 208.5 375.5C206.1 372.3 207.5 361.8 207.3 355.0C207.1 348.2 207.2 337.5 207.3 330.0C207.4 322.5 207.6 312.5 207.7 305.0C207.8 297.5 207.9 287.1 208.0 280.0C208.1 272.9 208.1 264.6 208.3 258.0C208.5 251.4 207.4 238.5 209.5 236.0Z" fill="url(#pantG)"/>
<path d="M209.5 236.0C211.6 233.5 217.4 240.3 222.0 241.5C226.6 242.7 234.6 244.0 240.0 244.0C245.4 244.0 252.7 242.7 258.0 241.5C263.3 240.3 272.5 234.7 275.3 236.0C278.1 237.3 276.0 245.2 276.5 250.0C277.0 254.8 278.0 262.8 278.5 268.0C279.0 273.2 279.6 279.4 280.0 285.0C280.4 290.6 281.1 298.2 281.5 305.0C281.9 311.8 282.4 322.5 282.5 330.0C282.6 337.5 282.6 347.5 282.5 355.0C282.4 362.5 284.0 376.2 281.5 380.0C279.0 383.8 268.8 382.1 266.0 380.0C263.2 377.9 264.0 370.8 263.0 366.0C262.0 361.2 260.6 353.4 259.5 348.0C258.4 342.6 257.1 335.7 256.0 330.0C254.9 324.3 253.2 315.9 252.0 310.0C250.8 304.1 249.1 295.6 248.0 291.0C246.9 286.4 245.6 281.8 244.5 279.0C243.4 276.2 241.9 272.4 241.0 272.5C240.1 272.6 239.2 276.9 238.5 280.0C237.8 283.1 237.0 288.2 236.5 293.0C236.0 297.8 235.6 306.1 235.0 312.0C234.4 317.9 233.5 326.0 232.5 332.0C231.5 338.0 229.8 345.3 228.5 352.0C227.2 358.7 226.5 373.0 223.5 376.5C220.5 380.0 210.9 378.7 208.5 375.5C206.1 372.3 207.5 361.8 207.3 355.0C207.1 348.2 207.2 337.5 207.3 330.0C207.4 322.5 207.6 312.5 207.7 305.0C207.8 297.5 207.9 287.1 208.0 280.0C208.1 272.9 208.1 264.6 208.3 258.0C208.5 251.4 207.4 238.5 209.5 236.0Z" fill="#fff" filter="url(#fab)" opacity="0.06"/>
<path d="M224.3 128.5C225.8 129.1 227.6 133.5 229.0 135.0C230.4 136.5 233.5 138.9 235.0 139.8C236.5 140.7 238.7 141.8 240.0 141.8C241.3 141.8 243.6 140.7 245.0 139.8C246.4 138.9 249.3 136.6 250.5 135.0C251.7 133.4 252.8 128.7 254.3 128.0C255.8 127.3 259.9 129.3 262.0 130.0C264.1 130.7 268.0 132.0 270.0 133.0C272.0 134.0 275.4 136.2 277.0 137.5C278.6 138.8 280.9 141.2 282.0 143.0C283.1 144.8 284.7 148.7 285.5 151.0C286.3 153.3 287.4 157.5 288.0 160.0C288.6 162.5 291.1 167.9 290.3 170.0C289.5 172.1 284.3 174.5 282.0 176.0C279.7 177.5 274.2 179.0 273.0 181.5C271.8 184.0 272.7 191.2 272.7 195.0C272.7 198.8 272.8 205.3 273.0 210.0C273.2 214.7 276.5 226.4 274.5 230.0C272.5 233.6 262.6 235.9 258.0 237.0C253.4 238.1 244.8 238.6 240.0 238.5C235.2 238.4 226.1 237.6 222.0 236.5C217.9 235.4 211.1 233.5 209.5 230.0C207.9 226.5 210.3 214.7 210.3 210.0C210.3 205.3 209.8 198.9 209.5 195.0C209.2 191.1 209.7 183.1 208.3 180.5C206.9 177.9 201.5 177.0 199.0 175.5C196.5 174.0 190.5 171.6 189.5 169.5C188.5 167.4 190.8 162.5 191.5 160.0C192.2 157.5 193.6 153.3 194.5 151.0C195.4 148.7 197.2 144.8 198.5 143.0C199.8 141.2 202.3 138.8 204.0 137.5C205.7 136.2 209.1 134.4 211.0 133.5C212.9 132.6 216.2 131.2 218.0 130.5C219.8 129.8 222.8 127.9 224.3 128.5Z" fill="url(#shirtG)"/>
<path d="M224.3 128.5C225.8 129.1 227.6 133.5 229.0 135.0C230.4 136.5 233.5 138.9 235.0 139.8C236.5 140.7 238.7 141.8 240.0 141.8C241.3 141.8 243.6 140.7 245.0 139.8C246.4 138.9 249.3 136.6 250.5 135.0C251.7 133.4 252.8 128.7 254.3 128.0C255.8 127.3 259.9 129.3 262.0 130.0C264.1 130.7 268.0 132.0 270.0 133.0C272.0 134.0 275.4 136.2 277.0 137.5C278.6 138.8 280.9 141.2 282.0 143.0C283.1 144.8 284.7 148.7 285.5 151.0C286.3 153.3 287.4 157.5 288.0 160.0C288.6 162.5 291.1 167.9 290.3 170.0C289.5 172.1 284.3 174.5 282.0 176.0C279.7 177.5 274.2 179.0 273.0 181.5C271.8 184.0 272.7 191.2 272.7 195.0C272.7 198.8 272.8 205.3 273.0 210.0C273.2 214.7 276.5 226.4 274.5 230.0C272.5 233.6 262.6 235.9 258.0 237.0C253.4 238.1 244.8 238.6 240.0 238.5C235.2 238.4 226.1 237.6 222.0 236.5C217.9 235.4 211.1 233.5 209.5 230.0C207.9 226.5 210.3 214.7 210.3 210.0C210.3 205.3 209.8 198.9 209.5 195.0C209.2 191.1 209.7 183.1 208.3 180.5C206.9 177.9 201.5 177.0 199.0 175.5C196.5 174.0 190.5 171.6 189.5 169.5C188.5 167.4 190.8 162.5 191.5 160.0C192.2 157.5 193.6 153.3 194.5 151.0C195.4 148.7 197.2 144.8 198.5 143.0C199.8 141.2 202.3 138.8 204.0 137.5C205.7 136.2 209.1 134.4 211.0 133.5C212.9 132.6 216.2 131.2 218.0 130.5C219.8 129.8 222.8 127.9 224.3 128.5Z" fill="#fff" filter="url(#fab)" opacity="0.07"/>
<path d="M209.8 227 C217 232 226 236 236 237.500 C246 238 262 234 275 228.300 L275.300 234.500 C262 240.500 246 244.300 236 244 C226 242.500 217 238.500 210 233.500Z" fill="#e2decd"/>
<path d="M227 236.200 l9.500 1.700 l-0.500 6 l-9.500 -2Z" fill="none" stroke="#151515" stroke-width="1.300"/>
<path d="M230.500 239.300 l8.500 1.300" stroke="#222" stroke-width="1.500"/>
</g>
<rect x="98.8" y="58.5" width="9.2" height="9.6" fill="#9c9ca0" rx="0.8"/>
<rect x="98.8" y="70.2" width="9.2" height="9.6" fill="#9c9ca0" rx="0.8"/>
<rect x="98.8" y="81.9" width="9.2" height="9.6" fill="#d9e6f2" rx="0.8"/>
<rect x="98.8" y="93.6" width="9.2" height="9.6" fill="#e6b27c" rx="0.8"/>
<path d="M101 61.300l2.800-1.800 3 1.800-1 4.200-3.800 0.600z" fill="#f2f2f2"/><circle cx="101.200" cy="65.800" r="1.500" fill="#1d1d1d"/>
<circle cx="104.200" cy="73.300" r="2" fill="#f6f6f6"/><path d="M101.300 79.300c0-4 5.800-4 5.800 0z" fill="#f6f6f6"/><circle cx="101.200" cy="77.800" r="1.500" fill="#1d1d1d"/>
<path d="M100.500 83.300h6.300v7h-6.300z" fill="#1a7fe0"/><path d="M100.500 83.300h2.600v7h-2.600z" fill="#8fd0ff"/>
<circle cx="103.300" cy="97" r="2.200" fill="#f8e0b0"/><path d="M100.800 103.300c0-4 5-4 5 0z" fill="#f8e0b0"/>
<rect x="384.3" y="53" width="286.2" height="369" fill="url(#grid2d)" />
<rect x="384" y="53" width="286.5" height="0.8" fill="#dadada" />
<rect x="384.3" y="53" width="0.8" height="369" fill="#e0e0e0" />
<g clip-path="url(#c2d)">
<rect x="492.7" y="53" width="0.7" height="369" fill="#a9a9a9" />
<rect x="384" y="265" width="286.5" height="0.6" fill="#b4b4b4" />
<g fill="#bfbfbf" filter="url(#soft)">
<path d="M487.500 116 C491 113.500 497 113.500 500.500 116 C503 118.500 503 124 501.500 128 L506 131 L510 136 L476 136 L480 131 L485.500 128 C484.500 124 485 118.500 487.500 116Z"/>
<path d="M472.500 214 L482.500 214 L483 262 L473.500 262 C472 246 471.500 230 472.500 214Z"/>
<path d="M503.500 236 L512 236 L512.500 300 L505 300Z" opacity="0.7"/>
</g>
<g filter="url(#soft2)">
<path d="M434.5 157.5L442.5 152.0L452.0 148.3L460.5 151.5L468.0 157.0L466.3 163.8L451.5 164.5L436.5 163.5Z" fill="#74aee6" stroke="#74aee6" stroke-width="3.0" stroke-linejoin="round"/>
<path d="M434.5 157.5L442.5 152.0L452.0 148.3L460.5 151.5L468.0 157.0L466.3 163.8L451.5 164.5L436.5 163.5Z" fill="#262628"/>
<line x1="451.8" y1="149" x2="451.8" y2="164" stroke="#5a5a5e" stroke-width="0.5" />
<line x1="435.5" y1="157.3" x2="467.5" y2="157.3" stroke="#5a6880" stroke-width="0.6" />
<path d="M442.0 148.5l2.500 7M462.0 148.8l-2.800 7" stroke="#e0262d" stroke-width="1.100"/>
<path d="M526.0 157.5L534.0 152.0L543.5 148.3L552.0 151.5L559.5 157.0L557.8 163.8L543.0 164.5L528.0 163.5Z" fill="#74aee6" stroke="#74aee6" stroke-width="3.0" stroke-linejoin="round"/>
<path d="M526.0 157.5L534.0 152.0L543.5 148.3L552.0 151.5L559.5 157.0L557.8 163.8L543.0 164.5L528.0 163.5Z" fill="#262628"/>
<line x1="543.3" y1="149" x2="543.3" y2="164" stroke="#5a5a5e" stroke-width="0.5" />
<line x1="527" y1="157.3" x2="559" y2="157.3" stroke="#5a6880" stroke-width="0.6" />
<path d="M533.5 148.5l2.500 7M553.5 148.8l-2.800 7" stroke="#e0262d" stroke-width="1.100"/>
<path d="M474.3 140.0L480.0 138.0L486.8 136.0L488.5 141.0L491.5 145.5L495.8 148.0L495.8 193.3L474.3 193.3L474.3 157.0L476.8 152.0L477.0 147.0L475.5 143.0Z" fill="#74aee6" stroke="#74aee6" stroke-width="3.0" stroke-linejoin="round"/>
<path d="M474.3 140.0L480.0 138.0L486.8 136.0L488.5 141.0L491.5 145.5L495.8 148.0L495.8 193.3L474.3 193.3L474.3 157.0L476.8 152.0L477.0 147.0L475.5 143.0Z" fill="#262628"/>
<path d="M520.8 143.0L519.3 147.0L519.5 152.0L522.0 157.0L522.0 193.3L500.5 193.3L500.5 148.0L504.8 145.5L507.8 141.0L509.5 136.0L516.3 138.0L522.0 140.0Z" fill="#74aee6" stroke="#74aee6" stroke-width="3.0" stroke-linejoin="round"/>
<path d="M520.8 143.0L519.3 147.0L519.5 152.0L522.0 157.0L522.0 193.3L500.5 193.3L500.5 148.0L504.8 145.5L507.8 141.0L509.5 136.0L516.3 138.0L522.0 140.0Z" fill="#262628"/>
<path d="M564.8 139.0L571.0 136.3L577.5 134.3L581.0 136.5L585.3 137.3L585.3 193.3L564.8 193.3L564.8 157.0L567.0 152.0L567.3 146.0L566.0 142.0Z" fill="#74aee6" stroke="#74aee6" stroke-width="3.0" stroke-linejoin="round"/>
<path d="M564.8 139.0L571.0 136.3L577.5 134.3L581.0 136.5L585.3 137.3L585.3 193.3L564.8 193.3L564.8 157.0L567.0 152.0L567.3 146.0L566.0 142.0Z" fill="#262628"/>
<path d="M608.6 142.0L607.3 146.0L607.6 152.0L609.8 157.0L609.8 193.3L589.3 193.3L589.3 137.3L593.6 136.5L597.1 134.3L603.6 136.3L609.8 139.0Z" fill="#74aee6" stroke="#74aee6" stroke-width="3.0" stroke-linejoin="round"/>
<path d="M608.6 142.0L607.3 146.0L607.6 152.0L609.8 157.0L609.8 193.3L589.3 193.3L589.3 137.3L593.6 136.5L597.1 134.3L603.6 136.3L609.8 139.0Z" fill="#262628"/>
<line x1="474.3" y1="156.8" x2="495.8" y2="156.8" stroke="#56627a" stroke-width="0.6" />
<line x1="474.3" y1="172.4" x2="495.8" y2="172.4" stroke="#56627a" stroke-width="0.6" />
<line x1="474.3" y1="190.5" x2="495.8" y2="190.5" stroke="#5c6c88" stroke-width="0.7" />
<line x1="500.5" y1="156.8" x2="522" y2="156.8" stroke="#56627a" stroke-width="0.6" />
<line x1="500.5" y1="172.4" x2="522" y2="172.4" stroke="#56627a" stroke-width="0.6" />
<line x1="500.5" y1="190.5" x2="522" y2="190.5" stroke="#5c6c88" stroke-width="0.7" />
<line x1="564.8" y1="156.8" x2="585.3" y2="156.8" stroke="#56627a" stroke-width="0.6" />
<line x1="564.8" y1="172.4" x2="585.3" y2="172.4" stroke="#56627a" stroke-width="0.6" />
<line x1="564.8" y1="190.5" x2="585.3" y2="190.5" stroke="#5c6c88" stroke-width="0.7" />
<line x1="589.3" y1="156.8" x2="609.8" y2="156.8" stroke="#56627a" stroke-width="0.6" />
<line x1="589.3" y1="172.4" x2="609.8" y2="172.4" stroke="#56627a" stroke-width="0.6" />
<line x1="589.3" y1="190.5" x2="609.8" y2="190.5" stroke="#5c6c88" stroke-width="0.7" />
<rect x="493.8" y="167.5" width="0.8" height="2" fill="#8f8f94" />
<rect x="501.6" y="167.5" width="0.8" height="2" fill="#8f8f94" />
<rect x="585.9" y="167.5" width="0.8" height="2" fill="#8f8f94" />
<rect x="587.9" y="167.5" width="0.8" height="2" fill="#8f8f94" />
<line x1="481.3" y1="128.6" x2="495.0" y2="128.6" stroke="#8fc0ee" stroke-width="3" opacity="0.8"/>
<line x1="481.8" y1="128.6" x2="494.5" y2="128.6" stroke="#161616" stroke-width="1.4" />
<line x1="481.8" y1="126.3" x2="481.8" y2="131" stroke="#2a2a2a" stroke-width="0.9" />
<line x1="494.5" y1="126.3" x2="494.5" y2="131" stroke="#2a2a2a" stroke-width="0.9" />
<line x1="498.0" y1="128.6" x2="512.0" y2="128.6" stroke="#8fc0ee" stroke-width="3" opacity="0.8"/>
<line x1="498.5" y1="128.6" x2="511.5" y2="128.6" stroke="#161616" stroke-width="1.4" />
<line x1="498.5" y1="126.3" x2="498.5" y2="131" stroke="#2a2a2a" stroke-width="0.9" />
<line x1="511.5" y1="126.3" x2="511.5" y2="131" stroke="#2a2a2a" stroke-width="0.9" />
<line x1="579.0" y1="128.6" x2="595.0" y2="128.6" stroke="#8fc0ee" stroke-width="3" opacity="0.8"/>
<line x1="579.5" y1="128.6" x2="594.5" y2="128.6" stroke="#161616" stroke-width="1.4" />
<line x1="579.5" y1="126.3" x2="579.5" y2="131" stroke="#2a2a2a" stroke-width="0.9" />
<line x1="594.5" y1="126.3" x2="594.5" y2="131" stroke="#2a2a2a" stroke-width="0.9" />
<rect x="586.3" y="126.5" width="1.2" height="3.4" fill="#333" />
<rect x="472.55" y="148.60000000000002" width="6.5" height="1.4" fill="#df2a34" transform="rotate(-12 475.8 149.3)"/>
<rect x="517.25" y="148.60000000000002" width="6.5" height="1.4" fill="#df2a34" transform="rotate(12 520.5 149.3)"/>
<rect x="562.6" y="146.3" width="8.8" height="2" fill="#df2a34" transform="rotate(0 567 147.3)"/>
<rect x="602.55" y="146.3" width="9.5" height="2" fill="#df2a34" transform="rotate(0 607.3 147.3)"/>
<line x1="579.5" y1="126" x2="579.5" y2="131.3" stroke="#d8303a" stroke-width="0.9" />
<line x1="594.5" y1="126" x2="594.5" y2="131.3" stroke="#d8303a" stroke-width="0.9" />
<rect x="464" y="203.3" width="76.5" height="3.6" fill="#d3cfba" stroke="#6a6a60" stroke-width="0.5"/>
<rect x="468.2" y="197.8" width="5.6" height="4.2" fill="#1c1c2a" />
<rect x="469.8" y="199" width="1.6" height="1.6" fill="#8a8ad0" />
<rect x="520.8" y="197.5" width="1" height="4.5" fill="#222" />
<path d="M463.500 202.500l2 2.200-2 2.200M541 202.500l-2 2.200 2 2.200" fill="none" stroke="#555" stroke-width="0.600"/>
<text x="515.5" y="210.8" font-size="4" fill="#3a3a3a" stroke="#3a3a3a" stroke-width="0.12" text-anchor="start" font-weight="bold" letter-spacing="-0.2">CXXK</text>
<path d="M476 216.800 C484 229 496 235.500 507.500 235.500 C519 235.500 530 229 537.500 216.500" fill="none" stroke="#3a3a3a" stroke-width="5"/>
<path d="M476 216.800 C484 229 496 235.500 507.500 235.500 C519 235.500 530 229 537.500 216.500" fill="none" stroke="#ecebe6" stroke-width="3.600"/>
<path d="M476 216.800 C484 229 496 235.500 507.500 235.500 C519 235.500 530 229 537.500 216.500" fill="none" stroke="#c0303a" stroke-width="3.600" stroke-dasharray="1 6.500 1 4 1 9" stroke-dashoffset="-3"/>
<path d="M476 216.800 C484 229 496 235.500 507.500 235.500 C519 235.500 530 229 537.500 216.500" fill="none" stroke="#2a2a2a" stroke-width="3.600" stroke-dasharray="0.8 11 0.800 7.500" stroke-dashoffset="-6"/>
<path d="M484.0 247.2L494.0 248.5L504.3 247.0L503.3 253.3L493.0 254.3L483.0 253.8Z" fill="#262628"/>
<path d="M511.5 247.3L521.0 248.5L530.5 247.3L531.5 253.8L521.0 254.5L512.5 253.5Z" fill="#262628"/>
<path d="M462.0 261.3L482.3 261.3L482.3 280.0L481.3 300.0L480.0 320.0L479.3 333.0L459.3 333.5L457.0 318.0L454.0 300.0L451.5 287.0L450.0 277.5L455.0 274.5L459.0 269.5L461.0 265.0Z" fill="#262628"/>
<path d="M484.0 262.0L503.0 261.3L504.3 270.0L506.3 280.5L505.0 295.0L503.0 312.0L500.5 328.0L499.3 337.5L488.0 337.5L486.8 320.0L485.5 300.0L484.3 280.0Z" fill="#262628"/>
<path d="M533.7 280.0L532.5 300.0L531.2 320.0L530.0 337.5L518.7 337.5L517.5 328.0L515.0 312.0L513.0 295.0L511.7 280.5L513.7 270.0L515.0 261.3L534.0 262.0Z" fill="#262628"/>
<path d="M560.0 265.0L562.0 269.5L566.0 274.5L571.0 277.5L569.5 287.0L567.0 300.0L564.0 318.0L561.7 333.5L541.7 333.0L541.0 320.0L539.7 300.0L538.7 280.0L538.7 261.3L559.0 261.3Z" fill="#262628"/>
<path d="M466 263.500h11.500v7.500l-5.750 3.300-5.750-3.300z" fill="none" stroke="#b8402f" stroke-width="0.600"/>
<path d="M543.5 263.500h11.500v7.500l-5.750 3.300-5.750-3.300z" fill="none" stroke="#b8402f" stroke-width="0.600"/>
</g>
</g>
<text transform="translate(6.3,28.5) rotate(90)" font-size="4" fill="#c9c9c9" font-weight="bold" letter-spacing="0.05">HISTORY</text>
<text transform="translate(6.3,55) rotate(90)" font-size="4" fill="#c9c9c9" font-weight="bold" letter-spacing="0.05">CONFIGURATOR</text>
<rect x="14.3" y="19.5" width="0.7" height="403.5" fill="#1a1a1a" />
<text x="53.5" y="25.1" font-size="4.5" fill="#cfcfcf" stroke="#cfcfcf" stroke-width="0.12" text-anchor="middle" >Library</text>
<path d="M18.300 25.300l1.300-1.300" stroke="#aaa" stroke-width="0.6"/><circle cx="20.500" cy="23" r="1.300" fill="none" stroke="#aaa" stroke-width="0.600"/>
<path d="M87 22.800h3l-1.500 1.700z" fill="#d0d0d0"/>
<text x="19" y="38.7" font-size="4.55" fill="#d4d4d4" stroke="#d4d4d4" stroke-width="0.12" text-anchor="start" >Favorites</text>
<text x="19" y="48.7" font-size="4.55" fill="#4f94dc" stroke="#4f94dc" stroke-width="0.12" text-anchor="start" >Garment</text>
<text x="19" y="58.7" font-size="4.55" fill="#d4d4d4" stroke="#d4d4d4" stroke-width="0.12" text-anchor="start" >Avatar</text>
<text x="19" y="68.7" font-size="4.55" fill="#d4d4d4" stroke="#d4d4d4" stroke-width="0.12" text-anchor="start" >Hair</text>
<text x="19" y="78.7" font-size="4.55" fill="#d4d4d4" stroke="#d4d4d4" stroke-width="0.12" text-anchor="start" >Shoes</text>
<text x="19" y="88.7" font-size="4.55" fill="#d4d4d4" stroke="#d4d4d4" stroke-width="0.12" text-anchor="start" >Pose</text>
<text x="19" y="98.7" font-size="4.55" fill="#d4d4d4" stroke="#d4d4d4" stroke-width="0.12" text-anchor="start" >Motion</text>
<text x="19" y="108.7" font-size="4.55" fill="#d4d4d4" stroke="#d4d4d4" stroke-width="0.12" text-anchor="start" >Hanger</text>
<text x="19" y="118.7" font-size="4.55" fill="#d4d4d4" stroke="#d4d4d4" stroke-width="0.12" text-anchor="start" >Fabric</text>
<text x="19" y="128.7" font-size="4.55" fill="#d4d4d4" stroke="#d4d4d4" stroke-width="0.12" text-anchor="start" >Hardware and Trims</text>
<path d="M76.500 37.200h3M78 35.700v3" stroke="#7a7a7a" stroke-width="0.700"/>
<path d="M84.500 37.200h3.500M86 35.800l1.900 1.400-1.900 1.400" stroke="#7a7a7a" stroke-width="0.700" fill="none"/>
<rect x="84" y="116" width="5.3" height="8" fill="#1b1b1b" />
<line x1="19" y1="131.8" x2="88" y2="131.8" stroke="#3a3a3a" stroke-width="0.5" stroke-dasharray="1 1"/>
<rect x="19" y="136" width="43.5" height="7.5" fill="#222223" />
<circle cx="66.800" cy="139.500" r="1.500" fill="none" stroke="#b5b5b5" stroke-width="0.600"/><path d="M67.900 140.600l1.500 1.500" stroke="#b5b5b5" stroke-width="0.600"/>
<circle cx="78" cy="139.800" r="1.700" fill="none" stroke="#b5b5b5" stroke-width="0.700" stroke-dasharray="8 2.500"/><path d="M78.500 136.800l1.800 1.300-2 0.900z" fill="#b5b5b5"/>
<rect x="83.5" y="136.5" width="5.5" height="6.5" fill="#3b3b3b" />
<path d="M84.800 138.300h3M84.800 139.800h3M84.800 141.300h3" stroke="#9a9a9a" stroke-width="0.600"/>
<g filter="url(#soft2)">
<path d="M25 156.800l6.500 2v18.500l-6.500-4.500z" fill="#c3ddf3"/>
<path d="M31.500 158.800l2.300-3.600v17.500l-2.300 4.600z" fill="#f2f8fd"/>
<path d="M33.800 155.200l7 2.800v18.500l-7-3.800z" fill="#d3e7f7"/>
<path d="M35.500 158.500l3.600 1.500v13.300l-3.600-2z" fill="#b3d3ef"/>
<path d="M26.300 159.800l3.500 1.300v12.500l-3.500-2.500z" fill="#e3f0fa"/>
<path d="M65.0 152.3L66.2 154.1L68.0 155.1L69.8 154.1L71.0 152.3L74.5 153.6L79.3 158.3L77.0 162.1L74.3 160.3L73.8 166.3L74.3 172.3L74.5 176.1L68.0 177.1L61.5 176.1L61.7 172.3L62.2 166.3L61.7 160.3L59.0 162.1L56.7 158.3L61.5 153.6Z" fill="#f4f4f4"/>
<path d="M65.4 152.60000000000002l2.6 2.5l2.6 -2.5l-2.6 0.8z" fill="#444"/>
<path d="M71.5 159.3l2.3 2.0l0.5 14.0l-3.0 1.0z" fill="#d2d2d2" opacity="0.7"/>
<path d="M61.7 160.3l1.5 -1.0l-0.3 16.0l-1.0 0.5z" fill="#d8d8d8" opacity="0.7"/>
<path d="M30.0 199.0L31.2 200.8L33.0 201.8L34.8 200.8L36.0 199.0L39.5 200.3L44.3 205.0L42.0 208.8L39.3 207.0L38.8 213.0L39.3 219.0L39.5 222.8L33.0 223.8L26.5 222.8L26.7 219.0L27.2 213.0L26.7 207.0L24.0 208.8L21.7 205.0L26.5 200.3Z" fill="#f4f4f4"/>
<path d="M30.4 199.3l2.6 2.5l2.6 -2.5l-2.6 0.8z" fill="#444"/>
<path d="M36.5 206.0l2.3 2.0l0.5 14.0l-3.0 1.0z" fill="#d2d2d2" opacity="0.7"/>
<path d="M26.7 207.0l1.5 -1.0l-0.3 16.0l-1.0 0.5z" fill="#d8d8d8" opacity="0.7"/>
</g>
<text x="32.5" y="186" font-size="4.2" fill="#c8c8c8" stroke="#c8c8c8" stroke-width="0.12" text-anchor="middle" >...</text>
<text x="65" y="186" font-size="4.2" fill="#c8c8c8" stroke="#c8c8c8" stroke-width="0.12" text-anchor="middle" >Femal....zpac</text>
<text x="30" y="233.5" font-size="4.2" fill="#c8c8c8" stroke="#c8c8c8" stroke-width="0.12" text-anchor="middle" >Male_....zpac</text>
<text x="735.5" y="25.1" font-size="4.5" fill="#cfcfcf" stroke="#cfcfcf" stroke-width="0.12" text-anchor="middle" >Object Browser</text>
<path d="M675.500 22.800h3l-1.500 1.700z" fill="#d0d0d0"/>
<path d="M791.800 25.300l1.300-1.300" stroke="#aaa" stroke-width="0.6"/><circle cx="794" cy="23" r="1.300" fill="none" stroke="#aaa" stroke-width="0.600"/>
<rect x="672" y="27.3" width="126" height="8.2" fill="#232324" />
<rect x="690.5" y="27.3" width="18" height="8.2" fill="#303031" />
<text x="681" y="33.3" font-size="4.7" fill="#cdcdcd" stroke="#cdcdcd" stroke-width="0.12" text-anchor="middle" >场景</text>
<text x="699" y="33.3" font-size="4.7" fill="#cdcdcd" stroke="#cdcdcd" stroke-width="0.12" text-anchor="middle" >织物</text>
<text x="717" y="33.3" font-size="4.7" fill="#cdcdcd" stroke="#cdcdcd" stroke-width="0.12" text-anchor="middle" >纽扣</text>
<text x="734.5" y="33.3" font-size="4.7" fill="#cdcdcd" stroke="#cdcdcd" stroke-width="0.12" text-anchor="middle" >扣眼</text>
<text x="753" y="33.3" font-size="4.7" fill="#cdcdcd" stroke="#cdcdcd" stroke-width="0.12" text-anchor="middle" >明线</text>
<text x="777" y="33.3" font-size="4.7" fill="#cdcdcd" stroke="#cdcdcd" stroke-width="0.12" text-anchor="middle" >缝纫褶皱</text>
<rect x="673" y="35.5" width="125" height="0.6" fill="#1a1a1a" />
<text x="735" y="48.3" font-size="4.7" fill="#b8b8b8" stroke="#b8b8b8" stroke-width="0.12" text-anchor="middle" >+ 增加</text>
<text x="757.5" y="48.3" font-size="4.4" fill="#505050" stroke="#505050" stroke-width="0.12" text-anchor="middle" >复制</text>
<rect x="750" y="44.800" width="3" height="3.300" fill="none" stroke="#505050" stroke-width="0.500"/>
<rect x="775.500" y="45" width="3" height="3" fill="none" stroke="#777" stroke-width="0.600"/><path d="M777 46.500l2.300-2.300" stroke="#777" stroke-width="0.600"/>
<text x="787" y="48.3" font-size="4.4" fill="#444" stroke="#444" stroke-width="0.12" text-anchor="middle" >删除</text>
<rect x="798" y="19.5" width="2" height="413" fill="#000" />
<circle cx="801" cy="46.3" r="8.600" fill="#52c25e"/><circle cx="801" cy="46.3" r="8.200" fill="none" stroke="#8fe29a" stroke-width="0.900"/><circle cx="801" cy="46.3" r="4" fill="#6ad676" filter="url(#blur08)"/>
<rect x="790.5" y="34.2" width="7" height="0.7" fill="#a03a4a" />
<rect x="692.5" y="56" width="15.3" height="15" fill="#dcdcdc" />
<text x="711.5" y="65" font-size="4.4" fill="#d0d0d0" stroke="#d0d0d0" stroke-width="0.12" text-anchor="start" >Default Fabric</text>
<rect x="692.5" y="74" width="15.3" height="15" fill="#000000" />
<text x="711.5" y="83" font-size="4.4" fill="#d0d0d0" stroke="#d0d0d0" stroke-width="0.12" text-anchor="start" >Default Fabric</text>
<rect x="692.5" y="92.3" width="15.3" height="15" fill="#dadada" />
<text x="711.5" y="101.3" font-size="4.4" fill="#d0d0d0" stroke="#d0d0d0" stroke-width="0.12" text-anchor="start" >FABRIC 15</text>
<rect x="692.5" y="110.5" width="15.3" height="15" fill="#303030" />
<text x="711.5" y="119.5" font-size="4.4" fill="#d0d0d0" stroke="#d0d0d0" stroke-width="0.12" text-anchor="start" >Super 120sWool_FCL1PSW00</text>
<rect x="692.5" y="128.8" width="15.3" height="15" fill="#d3cfbd" />
<text x="711.5" y="137.8" font-size="4.4" fill="#d0d0d0" stroke="#d0d0d0" stroke-width="0.12" text-anchor="start" >60sMuslin_FCL1PSM000</text>
<path d="M683.300 63.300l1.800 1.900 3.200-3.700" fill="none" stroke="#3a9be8" stroke-width="1.100"/>
<rect x="672" y="223.3" width="126" height="8" fill="#1e1e1f" />
<text x="735.5" y="229" font-size="4.5" fill="#cfcfcf" stroke="#cfcfcf" stroke-width="0.12" text-anchor="middle" >Property Editor</text>
<path d="M675.500 226.300h3l-1.500 1.700z" fill="#d0d0d0"/>
<path d="M791.800 229l1.300-1.300" stroke="#aaa" stroke-width="0.6"/><circle cx="794" cy="226.700" r="1.300" fill="none" stroke="#aaa" stroke-width="0.600"/>
<rect x="94" y="27" width="287.7" height="25" fill="#282828" />
<rect x="384.3" y="27" width="286.1" height="26" fill="#282828" />
<g filter="url(#soft2)">
<g transform="translate(103.6 34) scale(0.84) translate(-103.6 -34)" opacity="0.88"><path d="M100.1 33l3.500-2.500 3.500 2.500-3.500 4.500z" fill="#bdbdbd"/></g>
<g transform="translate(122 34) scale(0.84) translate(-122 -34)" opacity="0.88"><path d="M119 34h6M122 31v6" stroke="#17b4ba" stroke-width="1.100"/></g><path d="M116.2 29.5h1.500l-1.500 1.500z" fill="#a8a8a8"/>
<g transform="translate(136 34) scale(0.84) translate(-136 -34)" opacity="0.88"><rect x="133.7" y="32" width="4.600" height="4.600" fill="none" stroke="#858585" stroke-width="0.800"/></g><path d="M130.2 29.5h1.500l-1.500 1.500z" fill="#a8a8a8"/>
<g transform="translate(150 34) scale(0.84) translate(-150 -34)" opacity="0.88"><rect x="147.2" y="32.5" width="4.400" height="4.400" fill="none" stroke="#858585" stroke-width="0.800"/><path d="M150 34l3.300-3.300" stroke="#858585" stroke-width="0.900"/><rect x="152.3" y="30" width="1.700" height="1.700" fill="#858585"/></g><path d="M144.2 29.5h1.500l-1.500 1.500z" fill="#a8a8a8"/>
<g transform="translate(163 34) scale(0.84) translate(-163 -34)" opacity="0.88"><rect x="160.2" y="31.5" width="4" height="4" fill="none" stroke="#858585" stroke-width="0.800"/><circle cx="164.5" cy="35.3" r="1.400" fill="#bdbdbd"/></g>
<g transform="translate(180 34) scale(0.84) translate(-180 -34)" opacity="0.88"><path d="M177 37.3l6-6.600" stroke="#bdbdbd" stroke-width="0.900"/><circle cx="183" cy="30.7" r="1" fill="#bdbdbd"/></g><path d="M174.2 29.5h1.500l-1.500 1.500z" fill="#a8a8a8"/>
<g transform="translate(195 34) scale(0.84) translate(-195 -34)" opacity="0.88"><path d="M191.5 34c2-4 6-4 7.500-0.500c-2.500-1.500-5-1-7.500 0.500z" fill="#585858"/><path d="M194 34l3 3" stroke="#585858" stroke-width="1"/></g>
<g transform="translate(207 34) scale(0.84) translate(-207 -34)" opacity="0.88"><path d="M205.5 30.7l1.500 1 1.500-1 3 1.500-1 2.300-1.300-0.500v4.500h-4.400v-4.500l-1.300 0.500-1-2.300z" fill="#585858"/></g>
<g transform="translate(224 34) scale(0.84) translate(-224 -34)" opacity="0.88"><path d="M223.5 30.5v3.300h-3.800l1-2zM224.5 30.5v3.300h3.800l-1-2zM223.5 34.5v3.500h-2.300v-3.500zM224.5 34.5v3.500h2.300v-3.500z" fill="#bdbdbd"/></g>
<g transform="translate(239 34) scale(0.84) translate(-239 -34)" opacity="0.88"><path d="M236.2 31.5h2.300v6h-2.300zM239.5 31.5h2.300v6h-2.300z" fill="#bdbdbd"/></g>
<g transform="translate(257 34) scale(0.84) translate(-257 -34)" opacity="0.88"><path d="M255.5 30.7l1.500 1 1.500-1 3 1.500-1 2.300-1.300-0.500v4.500h-4.400v-4.500l-1.300 0.500-1-2.300z" fill="#858585"/></g><path d="M251.2 29.5h1.500l-1.500 1.500z" fill="#a8a8a8"/>
<g transform="translate(270 34) scale(0.84) translate(-270 -34)" opacity="0.88"><path d="M268.5 30.7l1.500 1 1.500-1 3 1.500-1 2.300-1.300-0.500v4.500h-4.400v-4.500l-1.300 0.500-1-2.300z" fill="#858585"/></g>
<g transform="translate(283 34) scale(0.84) translate(-283 -34)" opacity="0.88"><rect x="282.1" y="30" width="1.800" height="8" fill="#858585"/></g>
<g transform="translate(298 34) scale(0.84) translate(-298 -34)" opacity="0.88"><rect x="297.1" y="30" width="1.800" height="8" fill="#858585"/></g><path d="M292.2 29.5h1.500l-1.500 1.500z" fill="#a8a8a8"/>
<g transform="translate(315 34) scale(0.84) translate(-315 -34)" opacity="0.88"><path d="M312 31l6 6" stroke="#bdbdbd" stroke-width="1.100"/><circle cx="318" cy="37" r="1" fill="#bdbdbd"/></g><path d="M309.2 29.5h1.500l-1.500 1.500z" fill="#a8a8a8"/>
<g transform="translate(329 34) scale(0.84) translate(-329 -34)" opacity="0.88"><ellipse cx="329" cy="33.5" rx="3.500" ry="2.300" fill="none" stroke="#bdbdbd" stroke-width="1" transform="rotate(-12 329 34)"/></g>
<g transform="translate(342 34) scale(0.84) translate(-342 -34)" opacity="0.88"><rect x="341.1" y="30" width="1.800" height="8" fill="#858585"/></g>
<g transform="translate(394 34) scale(0.84) translate(-394 -34)" opacity="0.88"><path d="M390.5 37.5l7-7v7z" fill="#17b4ba"/></g><path d="M388.2 29.5h1.500l-1.500 1.500z" fill="#a8a8a8"/>
<g transform="translate(408 34) scale(0.84) translate(-408 -34)" opacity="0.88"><path d="M405 37l2.500-3.500 3.500-2.500" fill="none" stroke="#bdbdbd" stroke-width="0.700" stroke-dasharray="1.300 1"/><circle cx="405" cy="37" r="0.900" fill="#bdbdbd"/><circle cx="411" cy="31" r="0.900" fill="#bdbdbd"/><circle cx="410.5" cy="36.5" r="0.800" fill="#bdbdbd"/></g><path d="M402.2 29.5h1.500l-1.500 1.500z" fill="#a8a8a8"/>
<g transform="translate(421 34) scale(0.84) translate(-421 -34)" opacity="0.88"><path d="M418 37l2.500-3.500 3.500-2.500" fill="none" stroke="#858585" stroke-width="0.700" stroke-dasharray="1.300 1"/><circle cx="418" cy="37" r="0.900" fill="#858585"/><circle cx="424" cy="31" r="0.900" fill="#858585"/><circle cx="423.5" cy="36.5" r="0.800" fill="#858585"/></g><path d="M415.2 29.5h1.500l-1.500 1.500z" fill="#a8a8a8"/>
<g transform="translate(435 34) scale(0.84) translate(-435 -34)" opacity="0.88"><path d="M432 37l2.500-3.500 3.500-2.500" fill="none" stroke="#bdbdbd" stroke-width="0.700" stroke-dasharray="1.300 1"/><circle cx="432" cy="37" r="0.900" fill="#bdbdbd"/><circle cx="438" cy="31" r="0.900" fill="#bdbdbd"/><circle cx="437.5" cy="36.5" r="0.800" fill="#bdbdbd"/></g><path d="M429.2 29.5h1.500l-1.500 1.500z" fill="#a8a8a8"/>
<g transform="translate(448 34) scale(0.84) translate(-448 -34)" opacity="0.88"><path d="M445 37.3l6-6.600" stroke="#bdbdbd" stroke-width="0.900"/><circle cx="451" cy="30.7" r="1" fill="#bdbdbd"/></g>
<g transform="translate(462 34) scale(0.84) translate(-462 -34)" opacity="0.88"><path d="M459 37l2.500-3.500 3.500-2.500" fill="none" stroke="#bdbdbd" stroke-width="0.700" stroke-dasharray="1.300 1"/><circle cx="459" cy="37" r="0.900" fill="#bdbdbd"/><circle cx="465" cy="31" r="0.900" fill="#bdbdbd"/><circle cx="464.5" cy="36.5" r="0.800" fill="#bdbdbd"/></g><path d="M456.2 29.5h1.500l-1.500 1.500z" fill="#a8a8a8"/>
<g transform="translate(476 34) scale(0.84) translate(-476 -34)" opacity="0.88"><path d="M472.5 37v-2.500h2.300v-2h2.300v-2h2.400v6.500z" fill="#bdbdbd"/></g><path d="M470.2 29.5h1.500l-1.500 1.500z" fill="#a8a8a8"/>
<g transform="translate(489 34) scale(0.84) translate(-489 -34)" opacity="0.88"><path d="M485.5 37v-4.500l2.500-1.500h2l2.500 2v4z" fill="#585858"/></g>
<g transform="translate(503 34) scale(0.84) translate(-503 -34)" opacity="0.88"><rect x="499.5" y="31.5" width="7" height="5.500" fill="#7a7a7a"/></g>
<g transform="translate(517 34) scale(0.84) translate(-517 -34)" opacity="0.88"><circle cx="517" cy="34" r="3.100" fill="#6c6c6c"/></g>
<g transform="translate(531 34) scale(0.84) translate(-531 -34)" opacity="0.88"><rect x="527.5" y="31.2" width="7" height="6" fill="#a0a0a0"/><rect x="529" y="32.7" width="4" height="3" fill="none" stroke="#666" stroke-width="0.600"/></g>
<g transform="translate(544 34) scale(0.84) translate(-544 -34)" opacity="0.88"><rect x="540.5" y="31.2" width="7" height="6" fill="#909090"/><rect x="542" y="32.7" width="4" height="3" fill="none" stroke="#666" stroke-width="0.600"/></g>
<g transform="translate(558 34) scale(0.84) translate(-558 -34)" opacity="0.88"><rect x="554.5" y="31.2" width="7" height="6" fill="#808080"/><rect x="556" y="32.7" width="4" height="3" fill="none" stroke="#666" stroke-width="0.600"/></g>
<g transform="translate(572.4 34) scale(0.84) translate(-572.4 -34)" opacity="0.88"><rect x="569.6" y="31.5" width="4" height="4" fill="none" stroke="#858585" stroke-width="0.800"/><circle cx="573.9" cy="35.3" r="1.400" fill="#858585"/></g>
<g transform="translate(589.6 34) scale(0.84) translate(-589.6 -34)" opacity="0.88"><path d="M586.3000000000001 31.2h1.600v6h-1.600zM588.8000000000001 31.2h1.600v6h-1.600zM591.3000000000001 31.2h1.600v6h-1.600z" fill="#bdbdbd"/></g>
<g transform="translate(604 34) scale(0.84) translate(-604 -34)" opacity="0.88"><path d="M600.5 37v-2.500h2.300v-2h2.300v-2h2.400v6.500z" fill="#858585"/></g>
<g transform="translate(621 34) scale(0.84) translate(-621 -34)" opacity="0.88"><path d="M618.5 33l2-2 1.500 1.500 2-1v5.500h-5.500z" fill="#bdbdbd"/></g>
<g transform="translate(104.4 45.6) scale(0.84) translate(-104.4 -45.6)" opacity="0.88"><circle cx="104.4" cy="42.6" r="1" fill="#bdbdbd"/><path d="M100.9 43.6l3.500 2 3.500-2M104.4 44.1v2.500l-2.300 3.500M104.4 46.6l2.300 3.500" stroke="#bdbdbd" stroke-width="0.900" fill="none"/></g><path d="M98.60000000000001 41.1h1.500l-1.500 1.500z" fill="#a8a8a8"/>
<g transform="translate(121 45.6) scale(0.84) translate(-121 -45.6)" opacity="0.88"><path d="M118 42.6l6 6" stroke="#858585" stroke-width="1.100"/><circle cx="124" cy="48.6" r="1" fill="#858585"/></g><path d="M115.2 41.1h1.500l-1.500 1.500z" fill="#a8a8a8"/>
<g transform="translate(135 45.6) scale(0.84) translate(-135 -45.6)" opacity="0.88"><path d="M131 44.6l8-2.500-3.500 7.500-1-3.500z" fill="#858585"/></g>
<g transform="translate(153 45.6) scale(0.84) translate(-153 -45.6)" opacity="0.88"><path d="M150.5 44.6l2-2 1.500 1.500 2-1v5.500h-5.500z" fill="#858585"/></g><path d="M147.2 41.1h1.500l-1.500 1.500z" fill="#a8a8a8"/>
<g transform="translate(167 45.6) scale(0.84) translate(-167 -45.6)" opacity="0.88"><path d="M163 45.6l2.300-2.300 1.700 1.700 1.700-1.700 2.300 2.300-4 3.300z" fill="#858585"/></g><path d="M161.2 41.1h1.500l-1.500 1.500z" fill="#a8a8a8"/>
<g transform="translate(180 45.6) scale(0.84) translate(-180 -45.6)" opacity="0.88"><path d="M176 45.6l2.300-2.300 1.700 1.700 1.700-1.700 2.300 2.300-4 3.300z" fill="#858585"/></g>
<g transform="translate(198 45.6) scale(0.84) translate(-198 -45.6)" opacity="0.88"><circle cx="198" cy="45.9" r="2.600" fill="#bdbdbd"/><circle cx="198" cy="45.9" r="1" fill="#3a3a3a"/></g><path d="M192.2 41.1h1.500l-1.500 1.500z" fill="#a8a8a8"/>
<g transform="translate(211 45.6) scale(0.84) translate(-211 -45.6)" opacity="0.88"><circle cx="211" cy="45.9" r="2.600" fill="#bdbdbd"/><circle cx="211" cy="45.9" r="1" fill="#3a3a3a"/></g>
<g transform="translate(225 45.6) scale(0.84) translate(-225 -45.6)" opacity="0.88"><rect x="221.5" y="45.300000000000004" width="7" height="1.100" fill="#858585"/></g>
<g transform="translate(240 45.6) scale(0.84) translate(-240 -45.6)" opacity="0.88"><circle cx="240" cy="45.9" r="2.600" fill="#858585"/><circle cx="240" cy="45.9" r="1" fill="#3a3a3a"/></g><path d="M234.2 41.1h1.500l-1.500 1.500z" fill="#a8a8a8"/>
<g transform="translate(257 45.6) scale(0.84) translate(-257 -45.6)" opacity="0.88"><path d="M253.7 43.6h6.600v1h-6.600zM253.7 45.6h6.600v1h-6.600zM253.7 47.6l6.600 1v1l-6.600-1z" fill="#858585"/></g><path d="M251.2 41.1h1.500l-1.500 1.500z" fill="#a8a8a8"/>
<g transform="translate(270 45.6) scale(0.84) translate(-270 -45.6)" opacity="0.88"><path d="M266.7 43.6h6.600v1h-6.600zM266.7 45.6h6.600v1h-6.600zM266.7 47.6l6.600 1v1l-6.600-1z" fill="#858585"/></g>
<g transform="translate(288 45.6) scale(0.84) translate(-288 -45.6)" opacity="0.88"><circle cx="285.5" cy="46.1" r="0.900" fill="#bdbdbd"/><circle cx="290.5" cy="46.1" r="0.900" fill="#bdbdbd"/><rect x="287.6" y="43.1" width="0.800" height="6" fill="#bdbdbd"/></g>
<g transform="translate(305 45.6) scale(0.84) translate(-305 -45.6)" opacity="0.88"><path d="M302.2 49.1v-4a2.800 2.800 0 0 1 5.600 0v4" fill="none" stroke="#858585" stroke-width="1"/><rect x="304.6" y="44.6" width="0.800" height="4.500" fill="#858585"/></g>
<g transform="translate(319 45.6) scale(0.84) translate(-319 -45.6)" opacity="0.88"><path d="M316.2 49.1v-4a2.800 2.800 0 0 1 5.600 0v4" fill="none" stroke="#858585" stroke-width="1"/><rect x="318.6" y="44.6" width="0.800" height="4.500" fill="#858585"/></g>
<g transform="translate(334 45.6) scale(0.84) translate(-334 -45.6)" opacity="0.88"><path d="M331.5 44.6l2-2 1.500 1.500 2-1v5.500h-5.500z" fill="#bdbdbd"/></g>
<g transform="translate(350 45.6) scale(0.84) translate(-350 -45.6)" opacity="0.88"><path d="M348.5 42.300000000000004l1.500 1 1.500-1 3 1.500-1 2.300-1.300-0.500v4.500h-4.400v-4.500l-1.300 0.500-1-2.300z" fill="#858585"/></g><path d="M344.2 41.1h1.500l-1.500 1.500z" fill="#a8a8a8"/>
<g transform="translate(364 45.6) scale(0.84) translate(-364 -45.6)" opacity="0.88"><path d="M362.5 42.300000000000004l1.500 1 1.500-1 3 1.500-1 2.300-1.300-0.500v4.500h-4.400v-4.500l-1.300 0.500-1-2.300z" fill="#858585"/></g>
<g transform="translate(394 45.6) scale(0.84) translate(-394 -45.6)" opacity="0.88"><path d="M391 44.6h5.500v5h-4v-1.800h2.200v-1.400h-3.700z" fill="#bdbdbd"/><path d="M390.2 45.4l2.300-2.300v4.600z" fill="#bdbdbd"/></g><path d="M388.2 41.1h1.500l-1.500 1.500z" fill="#a8a8a8"/>
<g transform="translate(406 45.6) scale(0.84) translate(-406 -45.6)" opacity="0.88"><rect x="403" y="43.300000000000004" width="6" height="5" fill="none" stroke="#858585" stroke-width="0.800" stroke-dasharray="1.500 1.500"/></g>
<g transform="translate(421 45.6) scale(0.84) translate(-421 -45.6)" opacity="0.88"><rect x="418" y="43.300000000000004" width="6" height="5" fill="none" stroke="#585858" stroke-width="0.800" stroke-dasharray="1.500 1.500"/></g>
<g transform="translate(436 45.6) scale(0.84) translate(-436 -45.6)" opacity="0.88"><path d="M433 44.6h5.500v5h-4v-1.800h2.200v-1.400h-3.700z" fill="#bdbdbd"/><path d="M432.2 45.4l2.300-2.300v4.600z" fill="#bdbdbd"/></g><path d="M430.2 41.1h1.500l-1.500 1.500z" fill="#a8a8a8"/>
<g transform="translate(449 45.6) scale(0.84) translate(-449 -45.6)" opacity="0.88"><path d="M446 44.6h5.500v5h-4v-1.800h2.200v-1.400h-3.700z" fill="#bdbdbd"/><path d="M445.2 45.4l2.300-2.300v4.600z" fill="#bdbdbd"/></g>
<g transform="translate(466 45.6) scale(0.84) translate(-466 -45.6)" opacity="0.88"><path d="M462.5 48.6v-2.500h2.300v-2h2.300v-2h2.400v6.500z" fill="#585858"/></g>
<g transform="translate(483 45.6) scale(0.84) translate(-483 -45.6)" opacity="0.88"><path d="M479 45.6l2.300-2.300 1.700 1.700 1.700-1.700 2.300 2.300-4 3.300z" fill="#858585"/></g><path d="M477.2 41.1h1.500l-1.500 1.500z" fill="#a8a8a8"/>
<g transform="translate(502 45.6) scale(0.84) translate(-502 -45.6)" opacity="0.88"><path d="M499.5 44.6l2-2 1.500 1.500 2-1v5.500h-5.500z" fill="#bdbdbd"/></g><path d="M496.2 41.1h1.500l-1.500 1.500z" fill="#a8a8a8"/>
<g transform="translate(516 45.6) scale(0.84) translate(-516 -45.6)" opacity="0.88"><path d="M512 45.6l2.300-2.300 1.700 1.700 1.700-1.700 2.300 2.300-4 3.300z" fill="#858585"/></g><path d="M510.2 41.1h1.500l-1.500 1.500z" fill="#a8a8a8"/>
<g transform="translate(529 45.6) scale(0.84) translate(-529 -45.6)" opacity="0.88"><path d="M525 45.6l2.300-2.300 1.700 1.700 1.700-1.700 2.300 2.300-4 3.300z" fill="#858585"/></g>
<g transform="translate(543 45.6) scale(0.84) translate(-543 -45.6)" opacity="0.88"><path d="M540 48.6l2.500-3.500 3.500-2.500" fill="none" stroke="#2aa7b8" stroke-width="0.700" stroke-dasharray="1.300 1"/><circle cx="540" cy="48.6" r="0.900" fill="#2aa7b8"/><circle cx="546" cy="42.6" r="0.900" fill="#2aa7b8"/><circle cx="545.5" cy="48.1" r="0.800" fill="#2aa7b8"/></g>
<g transform="translate(559 45.6) scale(0.84) translate(-559 -45.6)" opacity="0.88"><path d="M556 48.9l6-6.600" stroke="#bdbdbd" stroke-width="0.900"/><circle cx="562" cy="42.300000000000004" r="1" fill="#bdbdbd"/></g><path d="M553.2 41.1h1.500l-1.500 1.500z" fill="#a8a8a8"/>
<g transform="translate(573 45.6) scale(0.84) translate(-573 -45.6)" opacity="0.88"><path d="M569.2 45.6h7.600" stroke="#858585" stroke-width="1" stroke-dasharray="1.500 1"/><path d="M569.2 47.4h7.600" stroke="#585858" stroke-width="0.600"/></g>
<g transform="translate(587 45.6) scale(0.84) translate(-587 -45.6)" opacity="0.88"><path d="M583 45.6c1.500-2 2.500-2 4 0s2.500 2 4 0" fill="none" stroke="#858585" stroke-width="0.900"/></g>
<g transform="translate(601 45.6) scale(0.84) translate(-601 -45.6)" opacity="0.88"><path d="M597 45.6c1.500-2 2.500-2 4 0s2.500 2 4 0" fill="none" stroke="#858585" stroke-width="0.900"/></g><path d="M595.2 41.1h1.500l-1.500 1.500z" fill="#a8a8a8"/>
<g transform="translate(615.6 45.6) scale(0.84) translate(-615.6 -45.6)" opacity="0.88"><path d="M612.6 48.9l6-6.600" stroke="#bdbdbd" stroke-width="0.900"/><circle cx="618.6" cy="42.300000000000004" r="1" fill="#bdbdbd"/></g>
<g transform="translate(632 45.6) scale(0.84) translate(-632 -45.6)" opacity="0.88"><path d="M633.5 42.1h-2v7.500h2" fill="none" stroke="#858585" stroke-width="0.900"/></g><path d="M626.2 41.1h1.500l-1.500 1.500z" fill="#a8a8a8"/>
<g transform="translate(646 45.6) scale(0.84) translate(-646 -45.6)" opacity="0.88"><path d="M642.2 45.6h7.600" stroke="#858585" stroke-width="1" stroke-dasharray="1.500 1"/><path d="M642.2 47.4h7.600" stroke="#585858" stroke-width="0.600"/></g>
<rect x="113" y="29" width="0.6" height="10" fill="#1c1c1c" />
<rect x="188" y="29" width="0.6" height="10" fill="#1c1c1c" />
<rect x="215.5" y="29" width="0.6" height="10" fill="#1c1c1c" />
<rect x="248" y="29" width="0.6" height="10" fill="#1c1c1c" />
<rect x="306.5" y="29" width="0.6" height="10" fill="#1c1c1c" />
<rect x="470" y="29" width="0.6" height="10" fill="#1c1c1c" />
<rect x="580.5" y="29" width="0.6" height="10" fill="#1c1c1c" />
<rect x="612" y="29" width="0.6" height="10" fill="#1c1c1c" />
<rect x="189" y="41" width="0.6" height="10" fill="#1c1c1c" />
<rect x="248.5" y="41" width="0.6" height="10" fill="#1c1c1c" />
<rect x="279.5" y="41" width="0.6" height="10" fill="#1c1c1c" />
<rect x="342" y="41" width="0.6" height="10" fill="#1c1c1c" />
<rect x="475" y="41" width="0.6" height="10" fill="#1c1c1c" />
<rect x="492.5" y="41" width="0.6" height="10" fill="#1c1c1c" />
<rect x="551" y="41" width="0.6" height="10" fill="#1c1c1c" />
<rect x="623" y="41" width="0.6" height="10" fill="#1c1c1c" />
</g>
<g filter="url(#soft2)">
<text x="322.9 352.3 384.6 417.0 449.0 480.9 512.9 544.8 576.8 608.7 640.6 672.6 704.6 736.5" y="356.6" font-size="30.3" fill="none" stroke="#000" stroke-opacity="0.2" stroke-width="2.300" class="wmc">深圳市力江自动化科技有限公司</text>
<text x="447.5 456.1 465.8 475.5 483.9 502.9 522.5 542.4 560.5 580.4 590.1 599.5 610.1 630.0 650.0 669.9 690.5 700.7 717.4 736.5" y="402.7" font-size="31.3" fill="none" stroke="#000" stroke-opacity="0.2" stroke-width="2.300" class="wml">lijiangkeji.1688.com</text>
<g opacity="0.74">
<text x="322.9 352.3 384.6 417.0 449.0 480.9 512.9 544.8 576.8 608.7 640.6 672.6 704.6 736.5" y="356.6" font-size="30.3" fill="#fff" stroke="#fff" stroke-width="0.85" class="wmc">深圳市力江自动化科技有限公司</text>
<text x="447.5 456.1 465.8 475.5 483.9 502.9 522.5 542.4 560.5 580.4 590.1 599.5 610.1 630.0 650.0 669.9 690.5 700.7 717.4 736.5" y="402.7" font-size="31.3" fill="#fff" stroke="#fff" stroke-width="0.900" class="wml">lijiangkeji.1688.com</text>
</g>
</g>
</g>
</svg>
</body></html>
